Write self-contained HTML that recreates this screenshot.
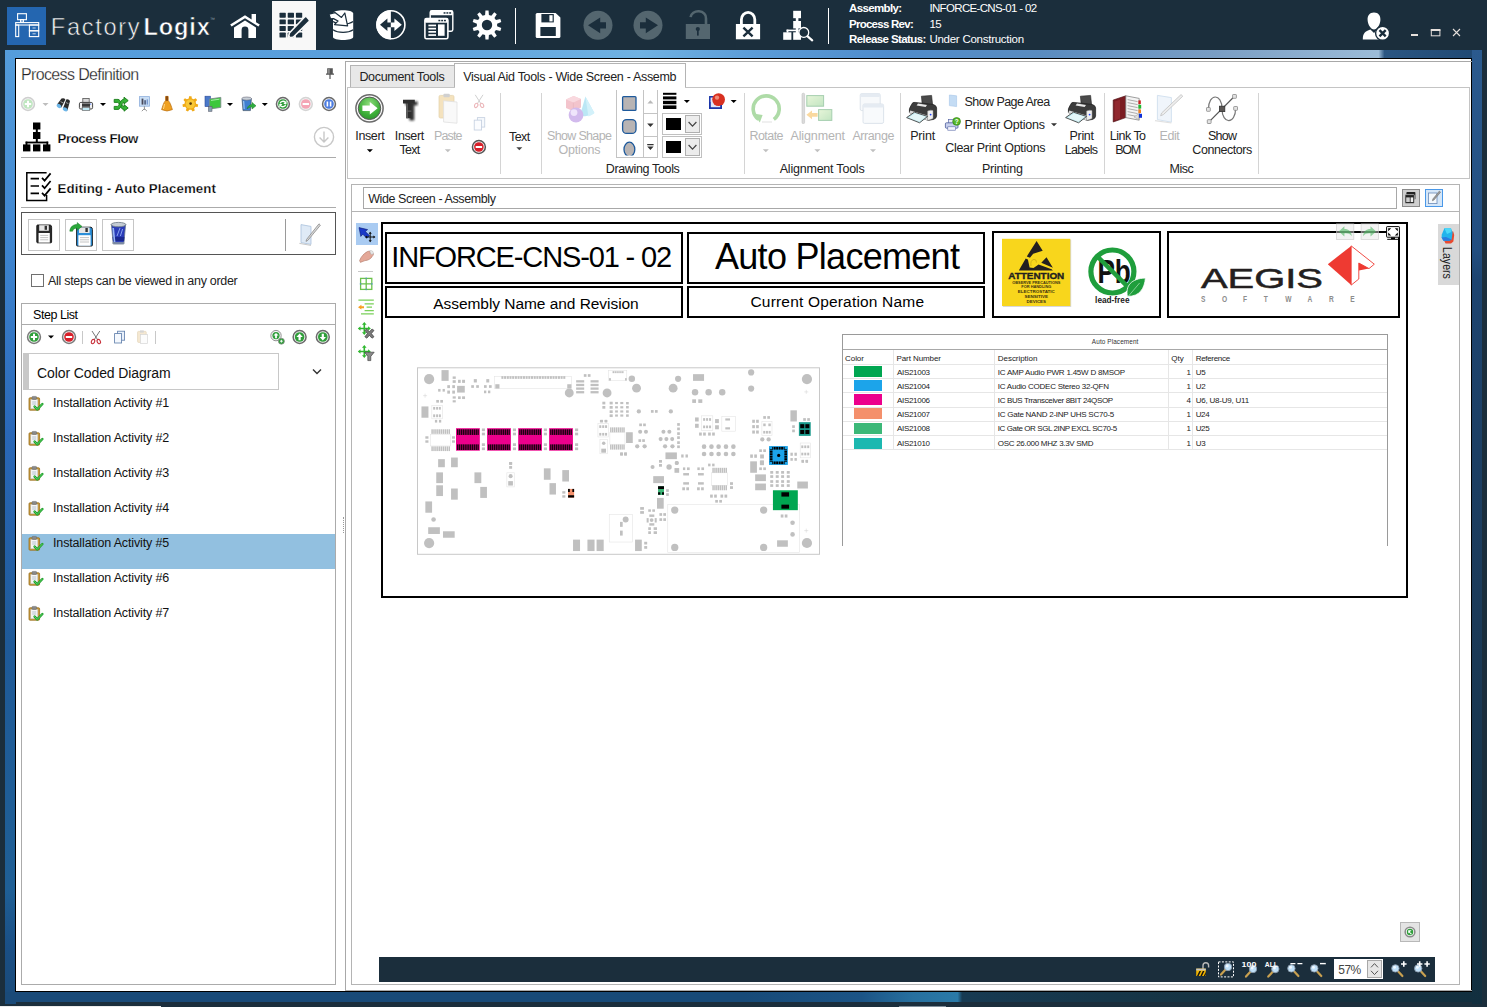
<!DOCTYPE html>
<html><head><meta charset="utf-8"><title>FactoryLogix</title>
<style>
html,body{margin:0;padding:0;}
body{width:1487px;height:1007px;overflow:hidden;position:relative;background:#1b2e3c;font-family:"Liberation Sans",sans-serif;}
.a{position:absolute;box-sizing:border-box;}
.t{position:absolute;white-space:nowrap;line-height:1;}
</style></head><body>
<div class="a" style="left:5px;top:50px;width:1477px;height:9px;background:linear-gradient(90deg,#559ddb 0%,#5a9fdc 25%,#70b2e2 43%,#5c9dd8 50.5%,#4f8ccc 60%,#5a8cc0 70%,#7a9ec4 82%,#9cbcd8 93%,#2b5682 93.4%,#1f4872 100%);"></div>
<div class="a" style="left:5px;top:50px;width:11px;height:954px;background:linear-gradient(180deg,#559ddb 0%,#3f86d0 20%,#2a68b8 40%,#1f5a98 62%,#1f5f95 88%,#1a4f85 94%,#1a4a78 100%);"></div>
<div class="a" style="left:5px;top:992px;width:1477px;height:10px;background:linear-gradient(90deg,#1a4a78 0%,#174a78 50%,#1b5486 58%,#27709f 61.5%,#2a7aa8 64.5%,#173a52 64.8%,#15323f 85%,#122f3f 100%);"></div>
<div class="a" style="left:1472px;top:50px;width:10px;height:954px;background:linear-gradient(180deg,#2b5a8e 0%,#224e80 21%,#1d4470 24%,#1b3a58 60%,#122f3f 100%);"></div>
<div class="a" style="left:0px;top:0px;width:5px;height:1007px;background:#1b2e3c;"></div>
<div class="a" style="left:0px;top:1004px;width:1487px;height:3px;background:#1b2e3c;"></div>
<div class="a" style="left:0px;top:1006px;width:161px;height:1px;background:#ececec;"></div>
<div class="a" style="left:899px;top:1006px;width:47px;height:1px;background:#7f8e9a;"></div>
<div class="a" style="left:15px;top:58px;width:1457px;height:934px;background:#fff;border:1px solid #000;"></div>
<div class="a" style="left:0px;top:0px;width:1487px;height:50px;background:#1b2e3c;"></div>
<div class="a" style="left:7px;top:7px;width:39px;height:38px;background:#2466b0;"></div>
<div class="a" style="left:272px;top:1px;width:44px;height:49px;background:#f8f8f8;"></div>
<div class="a" style="left:515px;top:8px;width:1px;height:36px;background:#fff;"></div>
<div class="a" style="left:828px;top:8px;width:1px;height:36px;background:#fff;"></div>
<svg class="a" style="left:0px;top:0px;" width="1487" height="50" viewBox="0 0 1487 50"><g fill="none" stroke="#fff" stroke-width="1.1"><rect x="17.6" y="13.7" width="8.8" height="6"/><rect x="20.6" y="19.7" width="2.8" height="2.4"/><rect x="15.7" y="22.6" width="23" height="2.4"/><rect x="15.7" y="25" width="3" height="11.6"/><rect x="29.4" y="25" width="9.3" height="5.8"/><rect x="29.4" y="30.8" width="9.3" height="5.8"/><path d="M32.5 28h3.2M32.5 33.8h3.2" stroke-width="0.9" opacity="0.8"/></g><path fill="#fff" d="M245 15.2 L230.2 24.6 L231.6 26.6 L245 18.2 L258.4 26.6 L259.8 24.6 L256 22.2 V14 H251.6 V19.4 Z"/><path fill="#fff" d="M245 20.4 L234 27.4 V38 H241.6 V30 a3.4 3.4 0 0 1 6.8 0 V38 H256 V27.4 Z"/><g fill="#1b2e3c"><rect x="279.5" y="12.8" width="6.3" height="4.9" rx="0.6"/><rect x="287.7" y="12.8" width="6.3" height="4.9" rx="0.6"/><rect x="295.9" y="12.8" width="6.3" height="4.9" rx="0.6"/><rect x="279.5" y="19.4" width="6.3" height="4.9" rx="0.6"/><rect x="287.7" y="19.4" width="6.3" height="4.9" rx="0.6"/><rect x="295.9" y="19.4" width="6.3" height="4.9" rx="0.6"/><rect x="279.5" y="26.0" width="6.3" height="4.9" rx="0.6"/><rect x="287.7" y="26.0" width="6.3" height="4.9" rx="0.6"/><rect x="295.9" y="26.0" width="6.3" height="4.9" rx="0.6"/><rect x="279.5" y="32.6" width="6.3" height="4.9" rx="0.6"/><rect x="287.7" y="32.6" width="6.3" height="4.9" rx="0.6"/><rect x="295.9" y="32.6" width="6.3" height="4.9" rx="0.6"/></g><path d="M304.6 17 a1.6 1.6 0 0 1 2.2 0 L309 19.4 a1.6 1.6 0 0 1 0 2.2 L293.4 37 L288.2 38.2 L289.4 33 Z" fill="#1b2e3c" stroke="#f8f8f8" stroke-width="1.6" stroke-linejoin="round"/><path d="M289.2 35.6 L290.7 37.1 L288.4 37.9 Z" fill="#f8f8f8"/><path fill="#fff" d="M333 13.5 C333 9 353.2 9 353.2 13.5 V37 C353.2 41 333 41 333 37 Z"/><path fill="none" stroke="#1b2e3c" stroke-width="1.3" d="M333 21.5 C338 25 348 25 353.2 21.5 M333 29.8 C338 33.3 348 33.3 353.2 29.8"/><path fill="#fff" stroke="#1b2e3c" stroke-width="1.2" stroke-linejoin="round" d="M329 14.2 L335 12.6 L341.5 17.4 L344.8 13 L347.6 25.8 L334.5 24.6 L338 21 L333.5 18.6 L330.5 18.8 Z"/><circle cx="390.9" cy="24.8" r="14" fill="none" stroke="#fff" stroke-width="1.6"/><path fill="#fff" d="M390.9 10.2 A14.6 14.6 0 0 0 390.9 39.4 Z"/><path fill="#1b2e3c" d="M380 24.8 L387.4 18.6 V22.4 H391 V27.2 H387.4 V31 Z"/><path fill="#fff" d="M401.8 24.8 L394.4 18.6 V22.4 H390.8 V27.2 H394.4 V31 Z"/><rect x="430.2" y="10.8" width="22.6" height="20.4" rx="1.6" fill="#1b2e3c" stroke="#fff" stroke-width="1.4"/><rect x="430.2" y="10.8" width="22.6" height="4.4" rx="1.2" fill="#fff"/><g fill="#1b2e3c"><rect x="443.6" y="12.2" width="1.9" height="1.5"/><rect x="446.4" y="12.2" width="1.9" height="1.5"/><rect x="449.2" y="12.2" width="1.9" height="1.5"/></g><rect x="424.9" y="18.6" width="23" height="20.2" rx="1.6" fill="#1b2e3c" stroke="#fff" stroke-width="1.6"/><rect x="424.9" y="18.6" width="23" height="4.2" rx="1.2" fill="#fff"/><g fill="#1b2e3c"><rect x="438.4" y="19.8" width="1.9" height="1.5"/><rect x="441.2" y="19.8" width="1.9" height="1.5"/><rect x="444" y="19.8" width="1.9" height="1.5"/></g><g fill="#fff"><rect x="428.4" y="24.6" width="7.6" height="1.7"/><rect x="428.4" y="27.8" width="7.6" height="1.7"/><rect x="428.4" y="31" width="7.6" height="1.7"/><rect x="428.4" y="34.2" width="7.6" height="1.7"/><rect x="438" y="24.4" width="6.6" height="11.4"/></g><path fill="#fff" fill-rule="evenodd" d="M485.09 14.98 L485.44 10.48 L488.56 10.48 L488.91 14.98 L491.34 15.77 L494.27 12.34 L496.79 14.17 L494.44 18.02 L495.94 20.09 L500.33 19.03 L501.29 21.99 L497.12 23.72 L497.12 26.28 L501.29 28.01 L500.33 30.97 L495.94 29.91 L494.44 31.98 L496.79 35.83 L494.27 37.66 L491.34 34.23 L488.91 35.02 L488.56 39.52 L485.44 39.52 L485.09 35.02 L482.66 34.23 L479.73 37.66 L477.21 35.83 L479.56 31.98 L478.06 29.91 L473.67 30.97 L472.71 28.01 L476.88 26.28 L476.88 23.72 L472.71 21.99 L473.67 19.03 L478.06 20.09 L479.56 18.02 L477.21 14.17 L479.73 12.34 L482.66 15.77 Z M481.80 25.00 a5.20 5.20 0 1 0 10.40 0 a5.20 5.20 0 1 0 -10.40 0 Z"/><path fill="#fff" d="M537.2 13 H555.6 L560.4 17.4 V36.4 a1.5 1.5 0 0 1 -1.5 1.5 H537.2 a1.5 1.5 0 0 1 -1.5 -1.5 V14.5 a1.5 1.5 0 0 1 1.5 -1.5 Z"/><rect x="541.4" y="14" width="12.4" height="8.4" fill="#1b2e3c"/><rect x="549.4" y="15.2" width="3.2" height="6.2" fill="#fff"/><rect x="540.4" y="27" width="15.4" height="9" fill="#1b2e3c"/><circle cx="598" cy="25.3" r="14.5" fill="#54666f"/><path fill="#1b2e3c" d="M588 25.3 L600.2 17.4 V22.2 H606 V28.4 H600.2 V33.2 Z"/><circle cx="648" cy="25.3" r="14.5" fill="#54666f"/><path fill="#1b2e3c" d="M658 25.3 L645.8 17.4 V22.2 H640 V28.4 H645.8 V33.2 Z"/><rect x="685.8" y="24" width="24.2" height="15" fill="#54666f"/><path fill="none" stroke="#54666f" stroke-width="2.6" d="M690.6 17.2 a7.6 6.4 0 0 1 15.4 1.2 V24.5"/><circle cx="697.8" cy="29" r="2.1" fill="#1b2e3c"/><rect x="697" y="29" width="1.7" height="6.6" fill="#1b2e3c"/><rect x="735.9" y="24" width="24.2" height="15.3" fill="#fff"/><path fill="none" stroke="#fff" stroke-width="2.8" d="M741.4 24.5 V19.6 a6.7 7.2 0 0 1 13.4 0 V24.5"/><path stroke="#1b2e3c" stroke-width="2.4" d="M743.4 27.6 L752.6 36.4 M752.6 27.6 L743.4 36.4"/><g fill="#fff"><rect x="793.2" y="10.8" width="7.8" height="7.4"/><rect x="795.8" y="18" width="2.6" height="3.4"/><rect x="793.2" y="21" width="7.8" height="7.4"/><rect x="795.8" y="28" width="2.6" height="5"/><rect x="786.6" y="29.6" width="12" height="1.6"/><rect x="786.6" y="29.6" width="1.8" height="3"/><rect x="783.2" y="32.3" width="8.2" height="7.5"/><rect x="793.2" y="32.3" width="7.8" height="7.5"/></g><circle cx="803.8" cy="32.4" r="4.9" fill="#1b2e3c" stroke="#fff" stroke-width="1.3"/><path stroke="#fff" stroke-width="2.2" stroke-linecap="round" d="M807.6 36.4 L812.2 40.4"/><path d="M1374 12.6 C1378.6 12.6 1380.6 16 1380.4 20 C1380.2 25 1377 29.4 1374 29.4 C1371 29.4 1367.8 25 1367.6 20 C1367.4 16 1369.4 12.6 1374 12.6 Z" fill="#fff"/><path fill="#fff" d="M1362.8 39.4 C1363 33 1365 31.5 1370.4 29.6 L1374 33 L1377.6 29.6 C1381 30.5 1383 32 1384 39.4 Z"/><circle cx="1382.6" cy="33.2" r="7" fill="#fff" stroke="#1b2e3c" stroke-width="1.4"/><path stroke="#1b2e3c" stroke-width="2.4" d="M1379.5 30.1 L1385.7 36.3 M1385.7 30.1 L1379.5 36.3"/><rect x="1411" y="34" width="7" height="2" fill="#e6e0dc"/><rect x="1431.3" y="30" width="8.6" height="5.8" fill="none" stroke="#e6e0dc" stroke-width="1"/><rect x="1430.8" y="29" width="9.6" height="2" fill="#e6e0dc"/><path stroke="#e6e0dc" stroke-width="1.1" d="M1453 29 L1460 36 M1460 29 L1453 36"/></svg>
<span class="t " style="left:50.80px;top:15.72px;font-size:23.6px;letter-spacing:1.688px;color:#f4f4f4;-webkit-text-stroke:0.55px #1b2e3c;">Factory</span>
<span class="t " style="left:143.60px;top:15.72px;font-size:23.6px;letter-spacing:0.814px;color:#fff;font-weight:bold;-webkit-text-stroke:0.6px #1b2e3c;">Logix</span>
<span class="t " style="left:210.00px;top:17.37px;font-size:5px;color:#8fa0aa;">™</span>
<span class="t " style="left:849.00px;top:2.67px;font-size:11.5px;letter-spacing:-0.629px;color:#fff;font-weight:bold;">Assembly:</span>
<span class="t " style="left:849.00px;top:19.07px;font-size:11.5px;letter-spacing:-0.740px;color:#fff;font-weight:bold;">Process Rev:</span>
<span class="t " style="left:849.00px;top:33.67px;font-size:11.5px;letter-spacing:-0.590px;color:#fff;font-weight:bold;">Release Status:</span>
<span class="t " style="left:929.40px;top:2.67px;font-size:11.5px;letter-spacing:-0.658px;color:#fff;">INFORCE-CNS-01 - 02</span>
<span class="t " style="left:929.40px;top:19.07px;font-size:11.5px;letter-spacing:-0.646px;color:#fff;">15</span>
<span class="t " style="left:929.40px;top:33.67px;font-size:11.5px;letter-spacing:-0.254px;color:#fff;">Under Construction</span>
<span class="t " style="left:21.00px;top:67.06px;font-size:16px;letter-spacing:-0.636px;color:#222;-webkit-text-stroke:0.25px #fff;">Process Definition</span>
<svg class="a" style="left:323px;top:67px;" width="14" height="14" viewBox="0 0 14 14"><path fill="#555" d="M4.2 1.2 H9.8 V6.6 H11 V7.8 H7.6 V12 H6.4 V7.8 H3 V6.6 H4.2 Z"/><rect x="5.2" y="2" width="1.4" height="4.6" fill="#999"/></svg>
<svg class="a" style="left:22px;top:122px;" width="30" height="30" viewBox="0 0 30 30"><g fill="#000"><rect x="11" y="0.5" width="7.4" height="7"/><rect x="13.8" y="7" width="2" height="4"/><rect x="11" y="10" width="7.4" height="7"/><rect x="13.8" y="16.5" width="2" height="4.5"/><rect x="3.6" y="19.6" width="22.6" height="1.8"/><rect x="3.6" y="19.6" width="1.8" height="4"/><rect x="24.4" y="19.6" width="1.8" height="4"/><rect x="1" y="22.4" width="7.4" height="7"/><rect x="11" y="22.4" width="7.4" height="7"/><rect x="21" y="22.4" width="7.4" height="7"/></g></svg>
<span class="t " style="left:57.50px;top:131.84px;font-size:13.3px;letter-spacing:-0.437px;color:#000;font-weight:bold;-webkit-text-stroke:0.25px #fff;">Process Flow</span>
<svg class="a" style="left:313px;top:126px;" width="22" height="22" viewBox="0 0 22 22"><circle cx="11" cy="11" r="9.6" fill="none" stroke="#c8c8c8" stroke-width="1.4"/><path d="M11 5.5 V15.5 M6.6 11.4 L11 16 L15.4 11.4" fill="none" stroke="#c8c8c8" stroke-width="1.4"/></svg>
<div class="a" style="left:21px;top:157px;width:315px;height:1px;background:#ababab;"></div>
<svg class="a" style="left:25px;top:171px;" width="30" height="32" viewBox="0 0 30 32"><path fill="none" stroke="#000" stroke-width="1.5" d="M21.6 1.8 H1.8 V29.4 H21.6 V24"/><path stroke="#000" stroke-width="1.6" fill="none" d="M5.6 7.6 H14 M5.6 15 H14 M5.6 22.4 H14"/><path stroke="#000" stroke-width="1.7" fill="none" d="M17 6.8 L19.6 9.6 L25.6 2.4 M17 14.4 L19.6 17.2 L25.6 10 M17 21.8 L19.6 24.6 L25.6 17.4"/></svg>
<span class="t " style="left:57.50px;top:181.84px;font-size:13.3px;letter-spacing:0.067px;color:#000;font-weight:bold;-webkit-text-stroke:0.25px #fff;">Editing - Auto Placement</span>
<div class="a" style="left:21px;top:207px;width:315px;height:1px;background:#ababab;"></div>
<div class="a" style="left:21px;top:212px;width:315px;height:43px;border:1px solid #555;"></div>
<div class="a" style="left:28px;top:219px;width:32px;height:32px;border:1px solid #c6c6c6;"></div>
<div class="a" style="left:65px;top:219px;width:32px;height:32px;border:1px solid #c6c6c6;"></div>
<div class="a" style="left:102px;top:219px;width:32px;height:32px;border:1px solid #c6c6c6;"></div>
<div class="a" style="left:285px;top:219px;width:1px;height:32px;background:#9a9a9a;"></div>
<div class="a" style="left:31px;top:274px;width:13px;height:13px;background:#fff;border:1px solid #707070;"></div>
<span class="t " style="left:48.00px;top:275.02px;font-size:12.5px;letter-spacing:-0.295px;color:#222;">All steps can be viewed in any order</span>
<div class="a" style="left:21px;top:303px;width:315px;height:682px;border:1px solid #ababab;"></div>
<span class="t " style="left:33.00px;top:309.02px;font-size:12.5px;letter-spacing:-0.460px;color:#000;">Step List</span>
<div class="a" style="left:22px;top:324px;width:313px;height:1px;background:#ababab;"></div>
<div class="a" style="left:82px;top:331px;width:1px;height:13px;background:#c8c8c8;"></div>
<div class="a" style="left:155px;top:331px;width:1px;height:13px;background:#c8c8c8;"></div>
<div class="a" style="left:23px;top:353px;width:256px;height:37px;background:#fff;border:1px solid #c8c8c8;"></div>
<div class="a" style="left:23px;top:353px;width:6px;height:37px;background:#c8c8c8;"></div>
<span class="t " style="left:37.00px;top:365.75px;font-size:14px;letter-spacing:-0.100px;color:#111;">Color Coded Diagram</span>
<svg class="a" style="left:311px;top:367px;" width="12" height="10" viewBox="0 0 12 10"><path d="M2 2.6 L6 6.6 L10 2.6" fill="none" stroke="#333" stroke-width="1.4"/></svg>
<div class="a" style="left:22px;top:534px;width:313px;height:35px;background:#92c0e0;"></div>
<span class="t " style="left:53.00px;top:397.02px;font-size:12.5px;letter-spacing:-0.146px;color:#111;">Installation Activity #1</span>
<span class="t " style="left:53.00px;top:432.02px;font-size:12.5px;letter-spacing:-0.146px;color:#111;">Installation Activity #2</span>
<span class="t " style="left:53.00px;top:467.02px;font-size:12.5px;letter-spacing:-0.146px;color:#111;">Installation Activity #3</span>
<span class="t " style="left:53.00px;top:502.02px;font-size:12.5px;letter-spacing:-0.146px;color:#111;">Installation Activity #4</span>
<span class="t " style="left:53.00px;top:537.02px;font-size:12.5px;letter-spacing:-0.146px;color:#111;">Installation Activity #5</span>
<span class="t " style="left:53.00px;top:572.02px;font-size:12.5px;letter-spacing:-0.146px;color:#111;">Installation Activity #6</span>
<span class="t " style="left:53.00px;top:607.02px;font-size:12.5px;letter-spacing:-0.146px;color:#111;">Installation Activity #7</span>
<div class="a" style="left:343px;top:517px;width:1px;height:16px;border-left:1px dotted #999;"></div>
<svg class="a" style="left:0px;top:0px;" width="360" height="700" viewBox="0 0 360 700"><g opacity="1"><circle cx="28" cy="104" r="6.45" fill="#f4f4f4" stroke="#cfcfcf" stroke-width="1.5"/><circle cx="28" cy="104" r="4.8" fill="#bfe6c0"/><g transform="translate(28 104)"><path stroke="#fff" stroke-width="2" d="M-3.2 0 H3.2 M0 -3.2 V3.2"/></g></g><path fill="#bdbdbd" d="M42.5 103 h6 l-3 3 Z"/><g><path d="M57 104.5 L61.5 98.6 Q64 97.4 65.4 99.6 L61.4 107.6 Z" fill="#2b2b2b"/><path d="M63 108.6 L66.2 99.6 Q68.6 98.6 70 101 L67.4 110.4 Z" fill="#2b2b2b"/><ellipse cx="59" cy="106" rx="2.6" ry="1.9" transform="rotate(35 59 106)" fill="#6db6e8"/><ellipse cx="65.2" cy="109.4" rx="2.6" ry="1.9" transform="rotate(25 65.2 109.4)" fill="#6db6e8"/><path d="M60.6 101.6 L63.6 103.2 M66 102.6 L68.4 103.6" stroke="#9a9a9a" stroke-width="1"/></g><g transform="translate(78.8 98)"><rect x="4" y="0.5" width="6.4" height="4" fill="#d8d8d8" stroke="#555" stroke-width="0.8"/><rect x="0.6" y="4.4" width="13.2" height="6.6" rx="1.4" fill="#f2f2f2" stroke="#333" stroke-width="0.9"/><rect x="3.2" y="5.4" width="8" height="3.4" fill="#3a3a3a"/><rect x="3.4" y="9.6" width="7.6" height="2.8" fill="#bfe9f5" stroke="#555" stroke-width="0.6"/><rect x="11.4" y="5.6" width="1" height="1" fill="#36f"/></g><path fill="#000" d="M100 103 h6 l-3 3 Z"/><g fill="#36b336" stroke="#167a16" stroke-width="0.9" stroke-linejoin="round"><path d="M114.2 99.4 H118 C121 99.4 121.6 106.6 124 106.6 V104.6 L128.2 108 L124 111.2 V109.4 C120 109.4 119.6 102.4 117.4 102.4 H114.2 Z"/><path d="M114.2 109.4 H118 C121 109.4 121.6 102.2 124 102.2 V104 L128.2 100.6 L124 97.2 V99.2 C120 99.2 119.6 106.4 117.4 106.4 H114.2 Z"/></g><g><rect x="139.4" y="96.6" width="10" height="9.6" fill="#c9def5" stroke="#8fb0dc" stroke-width="0.8"/><rect x="141.6" y="98.6" width="1.8" height="6" fill="#4a4a5a"/><rect x="144.2" y="100.2" width="1.8" height="4.4" fill="#5a6a8a"/><rect x="146.6" y="99.4" width="1.4" height="5.2" fill="#7a9ad0"/><path d="M144.4 106.2 V110 M144.4 108.6 L141.8 111.2 M144.4 108.6 L147 111.2" stroke="#8a8a8a" stroke-width="0.9" fill="none"/></g><g><path d="M165.6 96.4 h2.6 v4 C170.6 103 171.4 107 172.4 109.6 Q167 112.4 161.6 109.6 C162.6 107 163.2 103 165.6 100.4 Z" fill="#f0a020" stroke="#b86a08" stroke-width="0.7"/><rect x="165.8" y="96.2" width="2.2" height="4.6" fill="#8a4a10"/><path d="M164.4 104 Q164 107.6 163.4 109" stroke="#ffd98a" stroke-width="1" fill="none"/></g><path fill="#f0aa18" fill-rule="evenodd" d="M188.76 98.41 L189.10 96.19 L191.50 96.19 L191.84 98.41 L193.71 99.31 L195.66 98.19 L197.15 100.07 L195.63 101.72 L196.09 103.74 L198.18 104.57 L197.65 106.91 L195.41 106.75 L194.12 108.37 L194.77 110.51 L192.61 111.56 L191.34 109.71 L189.26 109.71 L187.99 111.56 L185.83 110.51 L186.48 108.37 L185.19 106.75 L182.95 106.91 L182.42 104.57 L184.51 103.74 L184.97 101.72 L183.45 100.07 L184.94 98.19 L186.89 99.31 Z M190.29 104.00 a0.01 0.01 0 1 0 0.02 0 a0.01 0.01 0 1 0 -0.02 0 Z"/><circle cx="190.3" cy="104" r="4.6" fill="#f8c838"/><circle cx="190.6" cy="103.6" r="1.3" fill="#5a3a08"/><g><rect x="205" y="96.2" width="5.4" height="10.4" fill="#4a78c8" stroke="#2a4a9a" stroke-width="0.6"/><path d="M209.6 99 L220.8 97.4 V107.4 L209.6 109 Z" fill="#3cc83c" stroke="#7a8a8a" stroke-width="0.9"/><path d="M211 100.4 L219.4 99.2" stroke="#a8f0a8" stroke-width="1"/><rect x="208.4" y="106.4" width="3.6" height="5" fill="#8aa0b0" stroke="#556" stroke-width="0.5"/></g><path fill="#000" d="M227 103 h6 l-3 3 Z"/><g><path d="M242 98.6 h9.4 l-1 12 h-7.4 Z" fill="#3f7fd0" stroke="#456" stroke-width="0.7"/><ellipse cx="246.7" cy="98.6" rx="4.9" ry="1.6" fill="#c8d0d8" stroke="#667" stroke-width="0.6"/><path d="M243.6 101 l0.6 8" stroke="#9cc4f0" stroke-width="1.2"/><path d="M247 108.8 C248 105.6 250 104.6 252 104.6 V102.4 L256 105.8 L252 109 V107 C250 107 248.6 107.6 247 108.8 Z" fill="#2fae3f" stroke="#1c7a2a" stroke-width="0.5"/></g><path fill="#000" d="M261.8 103 h6 l-3 3 Z"/><g opacity="1"><circle cx="282.9" cy="104" r="6.45" fill="#f4f4f4" stroke="#6a6a6a" stroke-width="1.5"/><circle cx="282.9" cy="104" r="4.8" fill="#2f9e3a"/><g transform="translate(282.9 104)"><path fill="none" stroke="#fff" stroke-width="1.3" d="M-2.8 -0.6 A3 3 0 0 1 2.4 -1.6 M2.8 0.6 A3 3 0 0 1 -2.4 1.6"/><path fill="#fff" d="M3.6 -3.4 V0 H0.4 Z M-3.6 3.4 V0 H-0.4 Z"/></g></g><g opacity="1"><circle cx="305.8" cy="104" r="6.45" fill="#f4f4f4" stroke="#d4d4d4" stroke-width="1.5"/><circle cx="305.8" cy="104" r="4.8" fill="#f4a6b6"/><g transform="translate(305.8 104)"><path stroke="#fff" stroke-width="2" d="M-3.2 0 H3.2"/></g></g><g opacity="1"><circle cx="329" cy="104" r="6.45" fill="#f4f4f4" stroke="#6a6a6a" stroke-width="1.5"/><circle cx="329" cy="104" r="4.8" fill="#4a7be0"/><g transform="translate(329 104)"><path stroke="#fff" stroke-width="1.6" d="M-1.6 -2.6 V2.6 M1.6 -2.6 V2.6"/></g></g><g opacity="1"><circle cx="34" cy="337" r="6.45" fill="#f4f4f4" stroke="#7a7a7a" stroke-width="1.5"/><circle cx="34" cy="337" r="4.8" fill="#2f9e3a"/><g transform="translate(34 337)"><path stroke="#fff" stroke-width="2" d="M-3.2 0 H3.2 M0 -3.2 V3.2"/></g></g><path fill="#000" d="M48 335.5 h6 l-3 3 Z"/><g opacity="1"><circle cx="69" cy="337" r="6.45" fill="#f4f4f4" stroke="#7a7a7a" stroke-width="1.5"/><circle cx="69" cy="337" r="4.8" fill="#d8202a"/><g transform="translate(69 337)"><path stroke="#fff" stroke-width="2" d="M-3.2 0 H3.2"/></g></g><g transform="translate(90.4 330.6)" opacity="1"><path d="M1.6 0.4 L7.4 9.4 M9.4 0.4 L3.6 9.4" stroke="#777" stroke-width="1" fill="none"/><ellipse cx="2.6" cy="11" rx="1.6" ry="2.2" fill="none" stroke="#c8303a" stroke-width="1.1" transform="rotate(25 2.6 11)"/><ellipse cx="8.4" cy="11" rx="1.6" ry="2.2" fill="none" stroke="#c8303a" stroke-width="1.1" transform="rotate(-25 8.4 11)"/></g><g transform="translate(114 330.6)" opacity="1"><rect x="3.6" y="0.6" width="7" height="9" fill="#e8f0fa" stroke="#5a7aa8" stroke-width="0.8"/><rect x="0.6" y="3" width="7" height="9.4" fill="#f4f8fd" stroke="#5a7aa8" stroke-width="0.8"/></g><g transform="translate(137 330)" opacity="0.4"><rect x="0.6" y="1.4" width="8.6" height="11" rx="0.8" fill="#e8c890" stroke="#b89450" stroke-width="0.7"/><rect x="3" y="0.4" width="3.8" height="2.2" fill="#999"/><rect x="3.4" y="4.6" width="7" height="9" fill="#fafafa" stroke="#999" stroke-width="0.7"/></g><g><circle cx="276" cy="335.6" r="5.2" fill="#f4f4f4" stroke="#888" stroke-width="0.9"/><circle cx="276" cy="335.6" r="3.6" fill="#2f9e3a"/><g transform="translate(276 335.6) scale(0.8)"><path fill="#fff" d="M0 -3.4 L3.2 0 H1.1 V3.2 H-1.1 V0 H-3.2 Z"/></g><circle cx="281.4" cy="341.2" r="3" fill="#2f9e3a" stroke="#888" stroke-width="0.7"/><path d="M280 341.2 h2.8 M281.4 339.8 v2.8" stroke="#fff" stroke-width="0.9"/></g><g opacity="1"><circle cx="299.6" cy="337" r="6.45" fill="#f4f4f4" stroke="#6a6a6a" stroke-width="1.5"/><circle cx="299.6" cy="337" r="4.8" fill="#2f9e3a"/><g transform="translate(299.6 337)"><path fill="#fff" d="M0 -3.4 L3.2 0 H1.1 V3.2 H-1.1 V0 H-3.2 Z"/></g></g><g opacity="1"><circle cx="322.8" cy="337" r="6.45" fill="#f4f4f4" stroke="#6a6a6a" stroke-width="1.5"/><circle cx="322.8" cy="337" r="4.8" fill="#2f9e3a"/><g transform="translate(322.8 337)"><path fill="#fff" d="M0 3.4 L3.2 0 H1.1 V-3.2 H-1.1 V0 H-3.2 Z"/></g></g><g transform="translate(36.2 224.4)"><path d="M0.6 1.4 Q0.6 0.6 1.4 0.6 H14 Q15.4 0.8 15.4 3 V17.6 Q15.4 18.4 14.6 18.4 H1.4 Q0.6 18.4 0.6 17.6 Z" fill="#2a2a2a" stroke="#111" stroke-width="0.9"/><rect x="3" y="0.8" width="9.6" height="5.6" fill="#e6e6e6"/><rect x="8.4" y="1.4" width="2.4" height="4" fill="#333"/><rect x="2.4" y="8.6" width="11.2" height="9.6" fill="#fff"/><path d="M4 11 h8 M4 13.2 h8 M4 15.4 h8" stroke="#aaa" stroke-width="0.7"/></g><g transform="translate(76 226.6)"><path d="M0.6 1.4 Q0.6 0.6 1.4 0.6 H15 Q16.4 0.8 16.4 3 V18.6 Q16.4 19.4 15.6 19.4 H1.4 Q0.6 19.4 0.6 18.6 Z" fill="#2a8ed8" stroke="#111" stroke-width="0.9"/><rect x="3" y="0.8" width="10.6" height="5.6" fill="#e6e6e6"/><rect x="9.4" y="1.4" width="2.4" height="4" fill="#333"/><rect x="2.4" y="8.6" width="12.2" height="10.6" fill="#fff"/><path d="M4 11 h9 M4 13.2 h9 M4 15.4 h9" stroke="#aaa" stroke-width="0.7"/></g><path d="M69.8 231.2 C70.2 226.6 73.4 224.4 77.2 224.6 V222.6 L82 226.4 L77.2 230.2 V228.2 C74.8 228 73 229 72.6 231.2 Z" fill="#2aa83a" stroke="#187a28" stroke-width="0.5"/><g><path d="M111.4 224.6 h14.2 l-1.8 19.4 h-10.6 Z" fill="#2a3cb8" stroke="#6a7a8a" stroke-width="0.8"/><path d="M112.6 237 h11.8 l-0.4 4 h-11 Z" fill="#1a2890"/><ellipse cx="118.5" cy="224.6" rx="7.4" ry="2.2" fill="#c4ccd4" stroke="#6a7684" stroke-width="0.8"/><path d="M113.2 228 l1.4 14" stroke="#9ab8f4" stroke-width="1.6"/><path d="M117 236 L120 228 M120.4 236 L122.6 229" stroke="#8aa4f0" stroke-width="1"/><path d="M112.6 243 h11.6" stroke="#8a96a4" stroke-width="1.6"/></g><g transform="translate(298.4 223) scale(1)" opacity="1"><path d="M2.6 1.6 L12.6 3.4 V21.4 L2.6 19.6 Z" fill="#dfeaf6" stroke="#a8c0dc" stroke-width="0.8"/><path d="M1 20.4 L12.6 22.4" stroke="#c8c8c8" stroke-width="1"/><path d="M20.6 0.8 L22 2.2 L9.4 17.4 L7.6 18.4 L8.2 16.4 Z" fill="#d8d8d8" stroke="#8a8a8a" stroke-width="0.8"/></g><g transform="translate(28.2 395.6)"><rect x="0.8" y="2.2" width="10.6" height="12.4" rx="1" fill="#c89a3c" stroke="#9a6e1c" stroke-width="0.8"/><rect x="2.6" y="3.8" width="7" height="9.4" fill="#f6f6f6" stroke="#bbb" stroke-width="0.5"/><rect x="3.8" y="0.8" width="4.6" height="3" rx="0.8" fill="#8a8a8a" stroke="#666" stroke-width="0.5"/><path d="M4 6.4 h4 M4 8.4 h4" stroke="#9ab" stroke-width="0.7"/><path d="M6.4 11 L9 13.8 L14.2 8.4" fill="none" stroke="#1f9a2a" stroke-width="2.4" stroke-linecap="round" stroke-linejoin="round"/><path d="M6.4 11 L9 13.8 L14.2 8.4" fill="none" stroke="#5fe06a" stroke-width="0.9" stroke-linecap="round" stroke-linejoin="round"/></g><g transform="translate(28.2 430.6)"><rect x="0.8" y="2.2" width="10.6" height="12.4" rx="1" fill="#c89a3c" stroke="#9a6e1c" stroke-width="0.8"/><rect x="2.6" y="3.8" width="7" height="9.4" fill="#f6f6f6" stroke="#bbb" stroke-width="0.5"/><rect x="3.8" y="0.8" width="4.6" height="3" rx="0.8" fill="#8a8a8a" stroke="#666" stroke-width="0.5"/><path d="M4 6.4 h4 M4 8.4 h4" stroke="#9ab" stroke-width="0.7"/><path d="M6.4 11 L9 13.8 L14.2 8.4" fill="none" stroke="#1f9a2a" stroke-width="2.4" stroke-linecap="round" stroke-linejoin="round"/><path d="M6.4 11 L9 13.8 L14.2 8.4" fill="none" stroke="#5fe06a" stroke-width="0.9" stroke-linecap="round" stroke-linejoin="round"/></g><g transform="translate(28.2 465.6)"><rect x="0.8" y="2.2" width="10.6" height="12.4" rx="1" fill="#c89a3c" stroke="#9a6e1c" stroke-width="0.8"/><rect x="2.6" y="3.8" width="7" height="9.4" fill="#f6f6f6" stroke="#bbb" stroke-width="0.5"/><rect x="3.8" y="0.8" width="4.6" height="3" rx="0.8" fill="#8a8a8a" stroke="#666" stroke-width="0.5"/><path d="M4 6.4 h4 M4 8.4 h4" stroke="#9ab" stroke-width="0.7"/><path d="M6.4 11 L9 13.8 L14.2 8.4" fill="none" stroke="#1f9a2a" stroke-width="2.4" stroke-linecap="round" stroke-linejoin="round"/><path d="M6.4 11 L9 13.8 L14.2 8.4" fill="none" stroke="#5fe06a" stroke-width="0.9" stroke-linecap="round" stroke-linejoin="round"/></g><g transform="translate(28.2 500.6)"><rect x="0.8" y="2.2" width="10.6" height="12.4" rx="1" fill="#c89a3c" stroke="#9a6e1c" stroke-width="0.8"/><rect x="2.6" y="3.8" width="7" height="9.4" fill="#f6f6f6" stroke="#bbb" stroke-width="0.5"/><rect x="3.8" y="0.8" width="4.6" height="3" rx="0.8" fill="#8a8a8a" stroke="#666" stroke-width="0.5"/><path d="M4 6.4 h4 M4 8.4 h4" stroke="#9ab" stroke-width="0.7"/><path d="M6.4 11 L9 13.8 L14.2 8.4" fill="none" stroke="#1f9a2a" stroke-width="2.4" stroke-linecap="round" stroke-linejoin="round"/><path d="M6.4 11 L9 13.8 L14.2 8.4" fill="none" stroke="#5fe06a" stroke-width="0.9" stroke-linecap="round" stroke-linejoin="round"/></g><g transform="translate(28.2 535.6)"><rect x="0.8" y="2.2" width="10.6" height="12.4" rx="1" fill="#c89a3c" stroke="#9a6e1c" stroke-width="0.8"/><rect x="2.6" y="3.8" width="7" height="9.4" fill="#f6f6f6" stroke="#bbb" stroke-width="0.5"/><rect x="3.8" y="0.8" width="4.6" height="3" rx="0.8" fill="#8a8a8a" stroke="#666" stroke-width="0.5"/><path d="M4 6.4 h4 M4 8.4 h4" stroke="#9ab" stroke-width="0.7"/><path d="M6.4 11 L9 13.8 L14.2 8.4" fill="none" stroke="#1f9a2a" stroke-width="2.4" stroke-linecap="round" stroke-linejoin="round"/><path d="M6.4 11 L9 13.8 L14.2 8.4" fill="none" stroke="#5fe06a" stroke-width="0.9" stroke-linecap="round" stroke-linejoin="round"/></g><g transform="translate(28.2 570.6)"><rect x="0.8" y="2.2" width="10.6" height="12.4" rx="1" fill="#c89a3c" stroke="#9a6e1c" stroke-width="0.8"/><rect x="2.6" y="3.8" width="7" height="9.4" fill="#f6f6f6" stroke="#bbb" stroke-width="0.5"/><rect x="3.8" y="0.8" width="4.6" height="3" rx="0.8" fill="#8a8a8a" stroke="#666" stroke-width="0.5"/><path d="M4 6.4 h4 M4 8.4 h4" stroke="#9ab" stroke-width="0.7"/><path d="M6.4 11 L9 13.8 L14.2 8.4" fill="none" stroke="#1f9a2a" stroke-width="2.4" stroke-linecap="round" stroke-linejoin="round"/><path d="M6.4 11 L9 13.8 L14.2 8.4" fill="none" stroke="#5fe06a" stroke-width="0.9" stroke-linecap="round" stroke-linejoin="round"/></g><g transform="translate(28.2 605.6)"><rect x="0.8" y="2.2" width="10.6" height="12.4" rx="1" fill="#c89a3c" stroke="#9a6e1c" stroke-width="0.8"/><rect x="2.6" y="3.8" width="7" height="9.4" fill="#f6f6f6" stroke="#bbb" stroke-width="0.5"/><rect x="3.8" y="0.8" width="4.6" height="3" rx="0.8" fill="#8a8a8a" stroke="#666" stroke-width="0.5"/><path d="M4 6.4 h4 M4 8.4 h4" stroke="#9ab" stroke-width="0.7"/><path d="M6.4 11 L9 13.8 L14.2 8.4" fill="none" stroke="#1f9a2a" stroke-width="2.4" stroke-linecap="round" stroke-linejoin="round"/><path d="M6.4 11 L9 13.8 L14.2 8.4" fill="none" stroke="#5fe06a" stroke-width="0.9" stroke-linecap="round" stroke-linejoin="round"/></g></svg>
<div class="a" style="left:345px;top:61px;width:1127px;height:930px;border:1px solid #a8a8a8;border-right:none;"></div>
<div class="a" style="left:350px;top:65px;width:105px;height:23px;background:#e8e8e8;border:1px solid #b4b4b4;border-bottom:none;"></div>
<div class="a" style="left:454px;top:63px;width:232px;height:25px;background:#fff;border:1px solid #b4b4b4;border-bottom:none;"></div>
<div class="a" style="left:347px;top:87px;width:1123px;height:92px;background:#fff;border:1px solid #c4c4c4;"></div>
<div class="a" style="left:455px;top:87px;width:230px;height:1px;background:#fff;"></div>
<span class="t " style="left:359.40px;top:70.62px;font-size:12.5px;letter-spacing:-0.314px;color:#222;">Document Tools</span>
<span class="t " style="left:463.20px;top:70.62px;font-size:12.5px;letter-spacing:-0.316px;color:#222;">Visual Aid Tools - Wide Screen - Assemb</span>
<div class="a" style="left:500px;top:93px;width:1px;height:81px;background:#d4d4d4;"></div>
<div class="a" style="left:541px;top:93px;width:1px;height:81px;background:#d4d4d4;"></div>
<div class="a" style="left:744px;top:93px;width:1px;height:81px;background:#d4d4d4;"></div>
<div class="a" style="left:900px;top:93px;width:1px;height:81px;background:#d4d4d4;"></div>
<div class="a" style="left:1104px;top:93px;width:1px;height:81px;background:#d4d4d4;"></div>
<div class="a" style="left:1258px;top:93px;width:1px;height:81px;background:#d4d4d4;"></div>
<span class="t " style="left:355.30px;top:129.92px;font-size:12.5px;letter-spacing:-0.377px;color:#222;">Insert</span>
<span class="t " style="left:394.80px;top:129.92px;font-size:12.5px;letter-spacing:-0.377px;color:#222;">Insert</span>
<span class="t " style="left:399.50px;top:144.02px;font-size:12.5px;letter-spacing:-0.731px;color:#222;">Text</span>
<span class="t " style="left:434.05px;top:129.92px;font-size:12.5px;letter-spacing:-0.893px;color:#b4b4b4;">Paste</span>
<span class="t " style="left:509.00px;top:131.02px;font-size:12.5px;letter-spacing:-0.581px;color:#222;">Text</span>
<span class="t " style="left:547.00px;top:129.92px;font-size:12.5px;letter-spacing:-0.669px;color:#b4b4b4;">Show Shape</span>
<span class="t " style="left:558.40px;top:144.02px;font-size:12.5px;letter-spacing:-0.154px;color:#b4b4b4;">Options</span>
<span class="t " style="left:605.75px;top:162.92px;font-size:12.5px;letter-spacing:-0.352px;color:#222;">Drawing Tools</span>
<span class="t " style="left:749.40px;top:129.92px;font-size:12.5px;letter-spacing:-0.538px;color:#b4b4b4;">Rotate</span>
<span class="t " style="left:790.45px;top:129.92px;font-size:12.5px;letter-spacing:-0.121px;color:#b4b4b4;">Alignment</span>
<span class="t " style="left:852.40px;top:129.92px;font-size:12.5px;letter-spacing:-0.410px;color:#b4b4b4;">Arrange</span>
<span class="t " style="left:779.75px;top:162.92px;font-size:12.5px;letter-spacing:-0.221px;color:#222;">Alignment Tools</span>
<span class="t " style="left:910.20px;top:129.92px;font-size:12.5px;letter-spacing:-0.181px;color:#222;">Print</span>
<span class="t " style="left:964.60px;top:95.62px;font-size:12.5px;letter-spacing:-0.580px;color:#222;">Show Page Area</span>
<span class="t " style="left:964.60px;top:119.02px;font-size:12.5px;letter-spacing:-0.218px;color:#222;">Printer Options</span>
<span class="t " style="left:945.20px;top:141.82px;font-size:12.5px;letter-spacing:-0.289px;color:#222;">Clear Print Options</span>
<span class="t " style="left:1069.50px;top:129.92px;font-size:12.5px;letter-spacing:-0.301px;color:#222;">Print</span>
<span class="t " style="left:1064.85px;top:144.02px;font-size:12.5px;letter-spacing:-0.756px;color:#222;">Labels</span>
<span class="t " style="left:981.95px;top:162.92px;font-size:12.5px;letter-spacing:-0.211px;color:#222;">Printing</span>
<span class="t " style="left:1109.85px;top:129.92px;font-size:12.5px;letter-spacing:-0.526px;color:#222;">Link To</span>
<span class="t " style="left:1115.20px;top:144.02px;font-size:12.5px;letter-spacing:-1.225px;color:#222;">BOM</span>
<span class="t " style="left:1159.55px;top:129.92px;font-size:12.5px;letter-spacing:-0.460px;color:#b4b4b4;">Edit</span>
<span class="t " style="left:1207.95px;top:129.92px;font-size:12.5px;letter-spacing:-0.742px;color:#222;">Show</span>
<span class="t " style="left:1192.35px;top:144.02px;font-size:12.5px;letter-spacing:-0.442px;color:#222;">Connectors</span>
<span class="t " style="left:1169.55px;top:162.92px;font-size:12.5px;letter-spacing:-0.498px;color:#222;">Misc</span>
<div class="a" style="left:616px;top:90px;width:42px;height:68px;border:1px solid #c4c4c4;border-top:none;"></div>
<div class="a" style="left:643px;top:90px;width:1px;height:68px;background:#c4c4c4;"></div>
<div class="a" style="left:643px;top:113px;width:15px;height:1px;background:#c4c4c4;"></div>
<div class="a" style="left:643px;top:136px;width:15px;height:1px;background:#c4c4c4;"></div>
<div class="a" style="left:662px;top:113px;width:40px;height:22px;background:#fff;border:1px solid #c0c0c0;"></div>
<div class="a" style="left:666px;top:118px;width:15px;height:12px;background:#000;"></div>
<div class="a" style="left:685px;top:115px;width:15px;height:18px;background:#ececec;border:1px solid #b0b0b0;"></div>
<div class="a" style="left:662px;top:136px;width:40px;height:22px;background:#fff;border:1px solid #c0c0c0;"></div>
<div class="a" style="left:666px;top:141px;width:15px;height:12px;background:#000;"></div>
<div class="a" style="left:685px;top:138px;width:15px;height:18px;background:#ececec;border:1px solid #b0b0b0;"></div>
<div class="a" style="left:351px;top:184px;width:1109px;height:801px;border:1px solid #b4b4b4;"></div>
<div class="a" style="left:351px;top:211px;width:1109px;height:1px;background:#b4b4b4;"></div>
<div class="a" style="left:363px;top:187px;width:1034px;height:22px;background:#fff;border:1px solid #a8a8a8;"></div>
<span class="t " style="left:368.20px;top:193.22px;font-size:12.5px;letter-spacing:-0.403px;color:#222;">Wide Screen - Assembly</span>
<div class="a" style="left:1402px;top:189px;width:18px;height:18px;background:#cfcfcf;border:1px solid #8a8a8a;"></div>
<div class="a" style="left:1425px;top:189px;width:18px;height:18px;background:#d4e6f8;border:1px solid #4a98e8;"></div>
<svg class="a" style="left:340px;top:85px;" width="1130" height="130" viewBox="340 85 1130 130"><defs><radialGradient id="gi" cx="0.5" cy="0.3" r="0.8"><stop offset="0" stop-color="#8fdc7c"/><stop offset="0.6" stop-color="#3cae38"/><stop offset="1" stop-color="#2a8c2c"/></radialGradient><linearGradient id="gp" x1="0" y1="0" x2="1" y2="1"><stop offset="0" stop-color="#d8f0c0"/><stop offset="1" stop-color="#9ad49a"/></linearGradient></defs><circle cx="369.5" cy="108.3" r="13.6" fill="#fafafa" stroke="#6a6a6a" stroke-width="1.5"/><circle cx="369.5" cy="108.3" r="11.2" fill="url(#gi)" stroke="#5a5a5a" stroke-width="1"/><path d="M362.4 105.6 H369.8 V102 L377.6 108.3 L369.8 114.6 V111 H362.4 Z" fill="#fff"/><path fill="#000" d="M366.9 149.2 h6 l-3 3 Z"/><g><path d="M405.4 101.6 H417.6 V105.2 H414.2 V120.4 H409.4 V105.2 H405.4 Z" fill="#111" opacity="0.85" filter="url(#bl)"/><filter id="bl"><feGaussianBlur stdDeviation="0.9"/></filter><path d="M403 99.8 H414.8 V103.6 H411.4 V118.2 H406.2 V103.6 H403 Z" fill="#2e2e2e"/><path d="M406.2 103.6 H408 V118.2 H406.2 Z" fill="#5a5a5a"/><rect x="406.2" y="110.6" width="5.2" height="1" fill="#666"/></g><g opacity="0.45"><rect x="439" y="95.4" width="15" height="22.6" rx="1.4" fill="#e8c070" stroke="#c09840" stroke-width="0.7"/><rect x="443.4" y="93.8" width="6.4" height="3.4" rx="1" fill="#999"/><path d="M443.6 100.8 L457 102 V123.2 L443.6 122 Z" fill="#f2f2f2" stroke="#bbb" stroke-width="0.8"/></g><path fill="#c0c0c0" d="M444.8 149.2 h6 l-3 3 Z"/><g transform="translate(473.6 94.4)" opacity="0.35"><path d="M1.6 0.4 L7.4 9.4 M9.4 0.4 L3.6 9.4" stroke="#777" stroke-width="1" fill="none"/><ellipse cx="2.6" cy="11" rx="1.6" ry="2.2" fill="none" stroke="#c8303a" stroke-width="1.1" transform="rotate(25 2.6 11)"/><ellipse cx="8.4" cy="11" rx="1.6" ry="2.2" fill="none" stroke="#c8303a" stroke-width="1.1" transform="rotate(-25 8.4 11)"/></g><g transform="translate(473.6 117) scale(1.05)" opacity="0.35"><rect x="3.6" y="0.6" width="7" height="9" fill="#e8f0fa" stroke="#5a7aa8" stroke-width="0.8"/><rect x="0.6" y="3" width="7" height="9.4" fill="#f4f8fd" stroke="#5a7aa8" stroke-width="0.8"/></g><g opacity="1"><circle cx="478.9" cy="147" r="6.45" fill="#f4f4f4" stroke="#555" stroke-width="1.5"/><circle cx="478.9" cy="147" r="4.8" fill="#d8202a"/><g transform="translate(478.9 147)"><path stroke="#fff" stroke-width="2" d="M-3.2 0 H3.2"/></g></g><path fill="#444" d="M516.3 147.2 h6 l-3 3 Z"/><g opacity="0.5"><path d="M566 99.6 L573.6 96 L581 99 V107.6 L573.4 111.2 L566 108 Z" fill="#e88a9a"/><path d="M566 99.6 L573.4 102.6 L581 99 L573.6 96 Z" fill="#f4b4c0"/><path d="M573.4 102.6 V111.2" stroke="#d06a7a" stroke-width="0.6"/><path d="M585.4 96.4 L594.4 113 Q588 118 580 115.4 Z" fill="#7ad0ec"/><path d="M585.4 96.4 L588.4 116.4 Q592 115.4 594.4 113 Z" fill="#a8e4f6"/><circle cx="576" cy="115" r="7.4" fill="#a678dc"/><circle cx="574" cy="112.6" r="3.4" fill="#e0ccf8"/></g><rect x="622.6" y="96.6" width="13.4" height="13.8" rx="1" fill="#b8b4b4" stroke="#1e5a9c" stroke-width="1.3"/><rect x="622.6" y="119.6" width="13.4" height="13.8" rx="4" fill="#b8b4b4" stroke="#1e5a9c" stroke-width="1.3"/><clipPath id="cg"><rect x="617" y="136" width="26" height="19.6"/></clipPath><ellipse cx="629.4" cy="149.4" rx="5.4" ry="7.2" fill="#b8b4b4" stroke="#1e5a9c" stroke-width="1.3" clip-path="url(#cg)"/><path d="M647.4 103.6 h6 l-3 -3.4 Z" fill="#b8b8b8"/><path d="M647.2 123.4 h6.4 l-3.2 3.6 Z" fill="#333"/><path d="M647.2 146.4 h6.4 l-3.2 3.6 Z M647.2 144 h6.4 v1.2 h-6.4 Z" fill="#333"/><g fill="#000"><rect x="663" y="92.8" width="13.4" height="2"/><rect x="663" y="96.4" width="13.4" height="3"/><rect x="663" y="100.8" width="13.4" height="3.4"/><rect x="663" y="105.4" width="13.4" height="3.6"/></g><path fill="#000" d="M683.9 100 h6 l-3 3 Z"/><path d="M688.6 122 l3.9 4.2 l3.9 -4.2" fill="none" stroke="#444" stroke-width="1.2"/><path d="M688.6 145 l3.9 4.2 l3.9 -4.2" fill="none" stroke="#444" stroke-width="1.2"/><rect x="709.8" y="96.8" width="11.4" height="11.4" fill="#dfe6fa" stroke="#1a34a8" stroke-width="1.5"/><circle cx="718.6" cy="99.6" r="6.4" fill="#d83020"/><circle cx="717" cy="97.6" r="2.2" fill="#f08a78"/><path d="M709.8 102 V108.2 H721.2 V105" fill="none" stroke="#1a34a8" stroke-width="1.5"/><path fill="#000" d="M730.7 100 h6 l-3 3 Z"/><g opacity="0.55"><path d="M758.6 119.4 A13 13 0 1 1 773.8 119.4" fill="none" stroke="#6cbe60" stroke-width="3.6"/><path d="M753.4 113.6 L762.6 115 L759.8 122.6 Z" fill="#6cbe60"/><path d="M762 122 H772" stroke="#d8d8d8" stroke-width="1.4"/></g><path fill="#c0c0c0" d="M762.8 149.2 h6 l-3 3 Z"/><g opacity="0.6"><rect x="802" y="93.2" width="2.6" height="30.4" rx="1.2" fill="#c4c4c4" stroke="#999" stroke-width="0.6"/><rect x="806.8" y="95.6" width="16.8" height="10.6" fill="url(#gp)" stroke="#6aae7a" stroke-width="1"/><rect x="818.6" y="109.6" width="13.2" height="10.8" fill="url(#gp)" stroke="#6aae7a" stroke-width="1"/><path d="M806.4 114.8 L812 110.6 V113 H817.6 V116.8 H812 V119.2 Z" fill="#f8c060"/></g><path fill="#c0c0c0" d="M814.4 149.2 h6 l-3 3 Z"/><g opacity="0.5"><rect x="860.2" y="93.6" width="20" height="17" rx="1.6" fill="#f0f4f8" stroke="#b4c4d4" stroke-width="0.9"/><rect x="860.2" y="93.6" width="20" height="3.4" rx="1.4" fill="#ccd8e6"/><rect x="863" y="104" width="20.6" height="19.4" rx="1.6" fill="#f2f6fa" stroke="#b4c4d4" stroke-width="0.9"/><rect x="863" y="104" width="20.6" height="3.6" rx="1.4" fill="#ccd8e6"/></g><path fill="#c0c0c0" d="M870 149.2 h6 l-3 3 Z"/><g transform="translate(906 95)"><path d="M15.4 1.2 L25.6 0.4 L26.6 10 L16.4 11 Z" fill="#4a4a4a" stroke="#222" stroke-width="0.6"/><path d="M5.6 9.4 Q6.4 7 9 7.4 L27 9.4 Q30.6 10.4 30.6 13 V21 Q30.4 23.6 27.6 24.4 L22 25.4 L3.4 17.6 Q2.4 14 5.6 9.4 Z" fill="#3c3c3c" stroke="#1c1c1c" stroke-width="0.7"/><path d="M12 8.6 L21 10 L19.6 12 L10.6 10.4 Z" fill="#e8e8e8"/><path d="M4.2 15.4 L21.6 20.4 V25.6 L3.4 18 Z" fill="#d8d8d8"/><path d="M21.6 16 Q25 14.6 27 15.6 V23.6 L21.6 25.4 Z" fill="#f0f0f0" stroke="#999" stroke-width="0.5"/><circle cx="24.6" cy="19.6" r="0.9" fill="#24f"/><path d="M8.4 17.2 L21.6 21.4 L13.6 27.8 L0.6 22.6 Z" fill="#bfe8ee" stroke="#444" stroke-width="0.9"/><path d="M9 18.4 L19.6 21.8 L13.4 26.4 L2.8 22.4 Z" fill="#e4f6f8"/></g><g transform="translate(1065 95)"><path d="M15.4 1.2 L25.6 0.4 L26.6 10 L16.4 11 Z" fill="#4a4a4a" stroke="#222" stroke-width="0.6"/><path d="M5.6 9.4 Q6.4 7 9 7.4 L27 9.4 Q30.6 10.4 30.6 13 V21 Q30.4 23.6 27.6 24.4 L22 25.4 L3.4 17.6 Q2.4 14 5.6 9.4 Z" fill="#3c3c3c" stroke="#1c1c1c" stroke-width="0.7"/><path d="M12 8.6 L21 10 L19.6 12 L10.6 10.4 Z" fill="#e8e8e8"/><path d="M4.2 15.4 L21.6 20.4 V25.6 L3.4 18 Z" fill="#d8d8d8"/><path d="M21.6 16 Q25 14.6 27 15.6 V23.6 L21.6 25.4 Z" fill="#f0f0f0" stroke="#999" stroke-width="0.5"/><circle cx="24.6" cy="19.6" r="0.9" fill="#24f"/><path d="M8.4 17.2 L21.6 21.4 L13.6 27.8 L0.6 22.6 Z" fill="#bfe8ee" stroke="#444" stroke-width="0.9"/><path d="M9 18.4 L19.6 21.8 L13.4 26.4 L2.8 22.4 Z" fill="#e4f6f8"/></g><path d="M949.4 95 L956.6 95.8 V106.6 L949.4 105.6 Z" fill="#c4dcf4" stroke="#a4c4e8" stroke-width="0.6"/><g><rect x="948.4" y="119.6" width="6.4" height="4" fill="#e8e8f4" stroke="#5a6aa8" stroke-width="0.7"/><rect x="945.4" y="122.8" width="12.6" height="5.4" rx="1" fill="#c8d0ec" stroke="#4a5a9a" stroke-width="0.8"/><rect x="947.8" y="126.8" width="7.8" height="3.4" fill="#f4f4fc" stroke="#5a6aa8" stroke-width="0.6"/><circle cx="956.6" cy="121.4" r="3.9" fill="#58b828" stroke="#2a7a10" stroke-width="0.6"/><text x="956.6" y="123.8" font-size="6.4" font-weight="bold" text-anchor="middle" fill="#fff" font-family="Liberation Sans, sans-serif">?</text></g><path fill="#333" d="M1051 123.2 h6 l-3 3 Z"/><g><path d="M1113.2 100 L1125.8 95.8 V117.6 L1113.2 122 Z" fill="#7a1c22" stroke="#4a0c10" stroke-width="0.6"/><path d="M1114.6 101.6 L1120 99.8 V118.6 L1114.6 120.4 Z" fill="#a03038" opacity="0.6"/><path d="M1125.8 95.8 L1139.2 98.4 V120.2 L1125.8 117.6 Z" fill="#f4f4f4" stroke="#777" stroke-width="0.7"/><path d="M1127.6 99.6 L1137.6 101.6 M1127.6 102.6 L1137.6 104.6 M1127.6 105.6 L1137.6 107.6 M1127.6 108.6 L1137.6 110.6 M1127.6 111.6 L1137.6 113.6 M1127.6 114.6 L1137.6 116.6" stroke="#9a9a9a" stroke-width="0.8"/><rect x="1138.4" y="100.4" width="2.4" height="3.6" fill="#c82020"/><rect x="1138.4" y="104.8" width="2.8" height="3.8" fill="#20b830"/><rect x="1138.4" y="109.4" width="2.6" height="3.6" fill="#f08020"/><rect x="1139" y="113.8" width="3" height="4" fill="#1030d8"/><path d="M1134 117 L1138.6 113.8 V119.6 Z" fill="#ddd" stroke="#888" stroke-width="0.4"/></g><g opacity="0.55"><path d="M1157.4 95.4 L1171.4 97.6 V122.2 L1157.4 119.6 Z" fill="#e4eef8" stroke="#a8c4e0" stroke-width="0.9"/><path d="M1155 120.6 L1171.4 123" stroke="#c8c8c8" stroke-width="1.2"/><path d="M1181 94.6 L1182.8 96.2 L1163.4 114.6 L1160.6 115.8 L1161.6 113 Z" fill="#e0e0e0" stroke="#9a9a9a" stroke-width="0.9"/></g><g fill="none" stroke="#555" stroke-width="1.2"><path d="M1210 120.8 L1233.8 97"/><path d="M1208.4 109.4 C1208.4 93 1222 93 1222 108.8 C1222 124.6 1235.6 124.6 1235.6 108.4" stroke="#777"/></g><rect x="1207.3" y="119.7" width="3.8" height="3.8" rx="0.6" fill="#e4e4e4" stroke="#888" stroke-width="0.8"/><rect x="1232.6" y="94.5" width="3.8" height="3.8" rx="0.6" fill="#e4e4e4" stroke="#888" stroke-width="0.8"/><rect x="1206.5" y="107.5" width="3.8" height="3.8" rx="0.6" fill="#e4e4e4" stroke="#888" stroke-width="0.8"/><rect x="1233.7" y="106.5" width="3.8" height="3.8" rx="0.6" fill="#e4e4e4" stroke="#888" stroke-width="0.8"/><rect x="1219.4" y="106.2" width="5.4" height="5.4" fill="#5a5654" stroke="#333" stroke-width="0.8"/><g><rect x="1406.4" y="192" width="9" height="7.6" rx="0.8" fill="#222"/><rect x="1405" y="194.6" width="9.4" height="8.8" rx="0.8" fill="#222" stroke="#cfcfcf" stroke-width="0.7"/><rect x="1406.2" y="197.4" width="3.6" height="4.6" fill="#cfcfcf"/><rect x="1410.6" y="197.4" width="2.6" height="4.6" fill="#eee"/></g><g><rect x="1428.6" y="193" width="8.4" height="10.6" fill="#f4f8fc" stroke="#6a8ab8" stroke-width="0.8"/><path d="M1439.4 191 L1440.6 192.2 L1434 200 L1432.4 200.8 L1432.8 199 Z" fill="#999" stroke="#666" stroke-width="0.5"/></g></svg>
<div class="a" style="left:356px;top:223px;width:22px;height:22px;background:#a9cbf2;"></div>
<div class="a" style="left:358px;top:271px;width:15px;height:1px;background:#c8c8c8;"></div>
<div class="a" style="left:381px;top:222px;width:1027px;height:376px;border:2px solid #000;"></div>
<div class="a" style="left:385px;top:232px;width:298px;height:51.5px;background:#fff;border:2px solid #000;"></div>
<div class="a" style="left:385px;top:286px;width:298px;height:32px;background:#fff;border:2px solid #000;"></div>
<div class="a" style="left:687px;top:232px;width:298px;height:51.5px;background:#fff;border:2px solid #000;"></div>
<div class="a" style="left:687px;top:286px;width:298px;height:32px;background:#fff;border:2px solid #000;"></div>
<div class="a" style="left:992px;top:231px;width:169px;height:87px;background:#fff;border:2px solid #000;"></div>
<div class="a" style="left:1167px;top:231px;width:233px;height:87px;background:#fff;border:2px solid #000;"></div>
<span class="t " style="left:391.30px;top:242.65px;font-size:29px;letter-spacing:-1.139px;color:#000;">INFORCE-CNS-01 - 02</span>
<span class="t " style="left:715.00px;top:238.93px;font-size:36px;letter-spacing:-0.711px;color:#000;">Auto Placement</span>
<span class="t " style="left:433.20px;top:296.08px;font-size:15.5px;letter-spacing:-0.048px;color:#000;">Assembly Name and Revision</span>
<span class="t " style="left:750.50px;top:293.98px;font-size:15.5px;letter-spacing:0.181px;color:#000;">Current Operation Name</span>
<svg class="a" style="left:410px;top:360px;" width="420" height="200" viewBox="410 360 420 200"><rect x="417.5" y="367.8" width="402" height="186.5" fill="#fff" stroke="#c8c8c8" stroke-width="1"/><circle cx="429.12" cy="379.12" r="5.11" fill="#c0c0c0"/><circle cx="569.27" cy="392.98" r="4.44" fill="#c0c0c0"/><circle cx="607.06" cy="392.98" r="4.44" fill="#c0c0c0"/><circle cx="603.70" cy="443.28" r="1.75" fill="#c0c0c0"/><rect x="494.35" y="376.43" width="77.34" height="12.10" fill="none" stroke="#e4e4e4" stroke-width="0.6"/><rect x="430.47" y="434.27" width="20.17" height="11.70" fill="none" stroke="#e4e4e4" stroke-width="0.6"/><rect x="441.50" y="370.11" width="7.13" height="10.76" fill="#c0c0c0" /><rect x="421.46" y="406.43" width="6.99" height="11.30" fill="#c0c0c0" /><rect x="452.66" y="376.43" width="3.09" height="2.42" fill="#c0c0c0" /><rect x="452.66" y="380.20" width="3.09" height="2.69" fill="#c0c0c0" /><rect x="458.04" y="379.79" width="2.69" height="3.09" fill="#c0c0c0" /><rect x="462.07" y="379.79" width="2.96" height="3.09" fill="#c0c0c0" /><rect x="447.28" y="385.17" width="2.69" height="2.96" fill="#c0c0c0" /><rect x="452.26" y="385.17" width="2.69" height="2.96" fill="#c0c0c0" /><rect x="447.28" y="390.55" width="2.69" height="3.09" fill="#c0c0c0" /><rect x="452.26" y="390.55" width="2.69" height="3.09" fill="#c0c0c0" /><rect x="438.13" y="388.94" width="2.42" height="2.69" fill="#c0c0c0" /><rect x="442.57" y="388.94" width="2.29" height="2.69" fill="#c0c0c0" /><rect x="457.10" y="385.85" width="7.67" height="6.72" fill="#c0c0c0" /><rect x="452.66" y="396.34" width="3.09" height="2.29" fill="#c0c0c0" /><rect x="458.04" y="396.34" width="2.69" height="2.69" fill="#c0c0c0" /><rect x="462.07" y="396.34" width="2.96" height="2.69" fill="#c0c0c0" /><rect x="452.66" y="400.24" width="3.09" height="2.15" fill="#c0c0c0" /><rect x="436.25" y="399.97" width="2.69" height="2.69" fill="#c0c0c0" /><rect x="440.29" y="399.97" width="2.69" height="2.69" fill="#c0c0c0" /><rect x="433.16" y="406.96" width="2.02" height="2.69" fill="#c0c0c0" /><rect x="436.12" y="406.96" width="2.02" height="2.69" fill="#c0c0c0" /><rect x="438.94" y="406.96" width="1.88" height="2.69" fill="#c0c0c0" /><rect x="433.16" y="414.36" width="2.02" height="2.82" fill="#c0c0c0" /><rect x="436.12" y="414.36" width="2.02" height="2.82" fill="#c0c0c0" /><rect x="438.94" y="414.36" width="1.88" height="2.82" fill="#c0c0c0" /><rect x="434.91" y="419.88" width="2.29" height="2.69" fill="#c0c0c0" /><rect x="438.94" y="419.88" width="2.29" height="2.69" fill="#c0c0c0" /><rect x="473.78" y="379.12" width="3.09" height="3.36" fill="#c0c0c0" /><rect x="471.22" y="385.17" width="2.69" height="2.69" fill="#c0c0c0" /><rect x="476.20" y="385.17" width="2.69" height="2.69" fill="#c0c0c0" /><rect x="486.28" y="379.12" width="2.96" height="3.36" fill="#c0c0c0" /><rect x="484.00" y="385.17" width="2.69" height="2.69" fill="#c0c0c0" /><rect x="488.97" y="385.17" width="2.69" height="2.69" fill="#c0c0c0" /><rect x="484.00" y="390.55" width="2.29" height="2.69" fill="#c0c0c0" /><rect x="488.03" y="390.55" width="2.29" height="2.69" fill="#c0c0c0" /><rect x="495.30" y="384.23" width="4.17" height="4.30" fill="#c0c0c0" /><rect x="567.25" y="384.23" width="4.17" height="4.30" fill="#c0c0c0" /><rect x="583.80" y="374.15" width="2.69" height="2.69" fill="#c0c0c0" /><rect x="587.83" y="374.15" width="2.69" height="2.69" fill="#c0c0c0" /><rect x="576.13" y="380.20" width="8.07" height="2.29" fill="#c0c0c0" /><rect x="576.13" y="383.83" width="8.07" height="2.29" fill="#c0c0c0" /><rect x="576.13" y="387.46" width="8.07" height="2.29" fill="#c0c0c0" /><rect x="576.13" y="391.09" width="8.07" height="2.29" fill="#c0c0c0" /><rect x="590.52" y="380.20" width="8.07" height="2.29" fill="#c0c0c0" /><rect x="590.52" y="383.83" width="8.07" height="2.29" fill="#c0c0c0" /><rect x="590.52" y="387.46" width="8.07" height="2.29" fill="#c0c0c0" /><rect x="590.52" y="391.09" width="8.07" height="2.29" fill="#c0c0c0" /><rect x="602.36" y="401.72" width="2.96" height="2.69" fill="#c0c0c0" /><rect x="602.36" y="406.02" width="2.96" height="2.69" fill="#c0c0c0" /><rect x="609.62" y="401.72" width="3.09" height="2.69" fill="#c0c0c0" /><rect x="609.62" y="406.02" width="3.09" height="2.69" fill="#c0c0c0" /><rect x="609.62" y="410.33" width="3.09" height="2.69" fill="#c0c0c0" /><rect x="609.62" y="414.36" width="3.09" height="2.69" fill="#c0c0c0" /><rect x="600.61" y="419.88" width="2.42" height="2.29" fill="#c0c0c0" /><rect x="604.64" y="419.88" width="2.42" height="2.29" fill="#c0c0c0" /><rect x="599.26" y="425.26" width="2.02" height="2.69" fill="#c0c0c0" /><rect x="602.22" y="425.26" width="2.02" height="2.69" fill="#c0c0c0" /><rect x="605.05" y="425.26" width="2.02" height="2.69" fill="#c0c0c0" /><rect x="599.26" y="432.92" width="2.02" height="2.69" fill="#c0c0c0" /><rect x="602.22" y="432.92" width="2.02" height="2.69" fill="#c0c0c0" /><rect x="605.05" y="432.92" width="2.02" height="2.69" fill="#c0c0c0" /><rect x="601.28" y="448.66" width="4.71" height="4.03" fill="#c0c0c0" /><rect x="425.36" y="436.28" width="3.09" height="2.42" fill="#c0c0c0" /><rect x="425.36" y="440.32" width="3.09" height="2.42" fill="#c0c0c0" /><rect x="451.99" y="436.28" width="2.96" height="2.42" fill="#c0c0c0" /><rect x="451.99" y="440.32" width="2.96" height="2.42" fill="#c0c0c0" /><rect x="438.13" y="459.15" width="6.72" height="8.07" fill="#c0c0c0" /><rect x="451.05" y="457.54" width="6.72" height="9.68" fill="#c0c0c0" /><rect x="509.15" y="462.11" width="2.96" height="2.69" fill="#c0c0c0" /><rect x="501.40" y="376.16" width="2.04" height="2.69" fill="#c0c0c0" /><rect x="504.09" y="376.16" width="2.04" height="2.69" fill="#c0c0c0" /><rect x="506.78" y="376.16" width="2.04" height="2.69" fill="#c0c0c0" /><rect x="509.47" y="376.16" width="2.04" height="2.69" fill="#c0c0c0" /><rect x="512.16" y="376.16" width="2.04" height="2.69" fill="#c0c0c0" /><rect x="514.85" y="376.16" width="2.04" height="2.69" fill="#c0c0c0" /><rect x="517.54" y="376.16" width="2.04" height="2.69" fill="#c0c0c0" /><rect x="520.23" y="376.16" width="2.04" height="2.69" fill="#c0c0c0" /><rect x="522.92" y="376.16" width="2.04" height="2.69" fill="#c0c0c0" /><rect x="525.61" y="376.16" width="2.04" height="2.69" fill="#c0c0c0" /><rect x="528.30" y="376.16" width="2.04" height="2.69" fill="#c0c0c0" /><rect x="530.99" y="376.16" width="2.04" height="2.69" fill="#c0c0c0" /><rect x="533.68" y="376.16" width="2.04" height="2.69" fill="#c0c0c0" /><rect x="536.37" y="376.16" width="2.04" height="2.69" fill="#c0c0c0" /><rect x="539.06" y="376.16" width="2.04" height="2.69" fill="#c0c0c0" /><rect x="541.75" y="376.16" width="2.04" height="2.69" fill="#c0c0c0" /><rect x="544.44" y="376.16" width="2.04" height="2.69" fill="#c0c0c0" /><rect x="547.13" y="376.16" width="2.04" height="2.69" fill="#c0c0c0" /><rect x="549.82" y="376.16" width="2.04" height="2.69" fill="#c0c0c0" /><rect x="552.51" y="376.16" width="2.04" height="2.69" fill="#c0c0c0" /><rect x="555.20" y="376.16" width="2.04" height="2.69" fill="#c0c0c0" /><rect x="557.89" y="376.16" width="2.04" height="2.69" fill="#c0c0c0" /><rect x="560.58" y="376.16" width="2.04" height="2.69" fill="#c0c0c0" /><rect x="563.27" y="376.16" width="2.04" height="2.69" fill="#c0c0c0" /><rect x="431.37" y="429.29" width="1.45" height="4.57" fill="#c0c0c0" /><rect x="433.28" y="429.29" width="1.45" height="4.57" fill="#c0c0c0" /><rect x="435.19" y="429.29" width="1.45" height="4.57" fill="#c0c0c0" /><rect x="437.10" y="429.29" width="1.45" height="4.57" fill="#c0c0c0" /><rect x="439.01" y="429.29" width="1.45" height="4.57" fill="#c0c0c0" /><rect x="440.92" y="429.29" width="1.45" height="4.57" fill="#c0c0c0" /><rect x="442.83" y="429.29" width="1.45" height="4.57" fill="#c0c0c0" /><rect x="444.74" y="429.29" width="1.45" height="4.57" fill="#c0c0c0" /><rect x="446.65" y="429.29" width="1.45" height="4.57" fill="#c0c0c0" /><rect x="448.56" y="429.29" width="1.45" height="4.57" fill="#c0c0c0" /><rect x="431.37" y="446.37" width="1.45" height="4.71" fill="#c0c0c0" /><rect x="433.28" y="446.37" width="1.45" height="4.71" fill="#c0c0c0" /><rect x="435.19" y="446.37" width="1.45" height="4.71" fill="#c0c0c0" /><rect x="437.10" y="446.37" width="1.45" height="4.71" fill="#c0c0c0" /><rect x="439.01" y="446.37" width="1.45" height="4.71" fill="#c0c0c0" /><rect x="440.92" y="446.37" width="1.45" height="4.71" fill="#c0c0c0" /><rect x="442.83" y="446.37" width="1.45" height="4.71" fill="#c0c0c0" /><rect x="444.74" y="446.37" width="1.45" height="4.71" fill="#c0c0c0" /><rect x="446.65" y="446.37" width="1.45" height="4.71" fill="#c0c0c0" /><rect x="448.56" y="446.37" width="1.45" height="4.71" fill="#c0c0c0" /><rect x="431.81" y="405.35" width="10.76" height="13.45" fill="none" stroke="#e4e4e4" stroke-width="0.6"/><rect x="597.92" y="423.51" width="10.36" height="13.45" fill="none" stroke="#e4e4e4" stroke-width="0.6"/><rect x="599.94" y="439.65" width="7.67" height="14.12" fill="none" stroke="#e4e4e4" stroke-width="0.6"/><path d="M423.09 395.67 h4 M425.09 393.67 v4" stroke="#d0d0d0" stroke-width="0.5"/><rect x="456.02" y="428.21" width="23.81" height="22.46" fill="#ec008c" /><rect x="457.05" y="429.29" width="1.41" height="5.65" fill="#1a0010" /><rect x="458.90" y="429.29" width="1.41" height="5.65" fill="#1a0010" /><rect x="460.75" y="429.29" width="1.41" height="5.65" fill="#1a0010" /><rect x="462.60" y="429.29" width="1.41" height="5.65" fill="#1a0010" /><rect x="464.45" y="429.29" width="1.41" height="5.65" fill="#1a0010" /><rect x="466.30" y="429.29" width="1.41" height="5.65" fill="#1a0010" /><rect x="468.15" y="429.29" width="1.41" height="5.65" fill="#1a0010" /><rect x="470.00" y="429.29" width="1.41" height="5.65" fill="#1a0010" /><rect x="471.85" y="429.29" width="1.41" height="5.65" fill="#1a0010" /><rect x="473.70" y="429.29" width="1.41" height="5.65" fill="#1a0010" /><rect x="475.54" y="429.29" width="1.41" height="5.65" fill="#1a0010" /><rect x="477.39" y="429.29" width="1.41" height="5.65" fill="#1a0010" /><rect x="457.05" y="444.35" width="1.41" height="5.65" fill="#1a0010" /><rect x="458.90" y="444.35" width="1.41" height="5.65" fill="#1a0010" /><rect x="460.75" y="444.35" width="1.41" height="5.65" fill="#1a0010" /><rect x="462.60" y="444.35" width="1.41" height="5.65" fill="#1a0010" /><rect x="464.45" y="444.35" width="1.41" height="5.65" fill="#1a0010" /><rect x="466.30" y="444.35" width="1.41" height="5.65" fill="#1a0010" /><rect x="468.15" y="444.35" width="1.41" height="5.65" fill="#1a0010" /><rect x="470.00" y="444.35" width="1.41" height="5.65" fill="#1a0010" /><rect x="471.85" y="444.35" width="1.41" height="5.65" fill="#1a0010" /><rect x="473.70" y="444.35" width="1.41" height="5.65" fill="#1a0010" /><rect x="475.54" y="444.35" width="1.41" height="5.65" fill="#1a0010" /><rect x="477.39" y="444.35" width="1.41" height="5.65" fill="#1a0010" /><rect x="487.09" y="428.21" width="23.81" height="22.46" fill="#ec008c" /><rect x="488.12" y="429.29" width="1.41" height="5.65" fill="#1a0010" /><rect x="489.97" y="429.29" width="1.41" height="5.65" fill="#1a0010" /><rect x="491.82" y="429.29" width="1.41" height="5.65" fill="#1a0010" /><rect x="493.67" y="429.29" width="1.41" height="5.65" fill="#1a0010" /><rect x="495.52" y="429.29" width="1.41" height="5.65" fill="#1a0010" /><rect x="497.37" y="429.29" width="1.41" height="5.65" fill="#1a0010" /><rect x="499.22" y="429.29" width="1.41" height="5.65" fill="#1a0010" /><rect x="501.07" y="429.29" width="1.41" height="5.65" fill="#1a0010" /><rect x="502.92" y="429.29" width="1.41" height="5.65" fill="#1a0010" /><rect x="504.76" y="429.29" width="1.41" height="5.65" fill="#1a0010" /><rect x="506.61" y="429.29" width="1.41" height="5.65" fill="#1a0010" /><rect x="508.46" y="429.29" width="1.41" height="5.65" fill="#1a0010" /><rect x="488.12" y="444.35" width="1.41" height="5.65" fill="#1a0010" /><rect x="489.97" y="444.35" width="1.41" height="5.65" fill="#1a0010" /><rect x="491.82" y="444.35" width="1.41" height="5.65" fill="#1a0010" /><rect x="493.67" y="444.35" width="1.41" height="5.65" fill="#1a0010" /><rect x="495.52" y="444.35" width="1.41" height="5.65" fill="#1a0010" /><rect x="497.37" y="444.35" width="1.41" height="5.65" fill="#1a0010" /><rect x="499.22" y="444.35" width="1.41" height="5.65" fill="#1a0010" /><rect x="501.07" y="444.35" width="1.41" height="5.65" fill="#1a0010" /><rect x="502.92" y="444.35" width="1.41" height="5.65" fill="#1a0010" /><rect x="504.76" y="444.35" width="1.41" height="5.65" fill="#1a0010" /><rect x="506.61" y="444.35" width="1.41" height="5.65" fill="#1a0010" /><rect x="508.46" y="444.35" width="1.41" height="5.65" fill="#1a0010" /><rect x="518.16" y="428.21" width="23.81" height="22.46" fill="#ec008c" /><rect x="519.19" y="429.29" width="1.41" height="5.65" fill="#1a0010" /><rect x="521.04" y="429.29" width="1.41" height="5.65" fill="#1a0010" /><rect x="522.89" y="429.29" width="1.41" height="5.65" fill="#1a0010" /><rect x="524.74" y="429.29" width="1.41" height="5.65" fill="#1a0010" /><rect x="526.59" y="429.29" width="1.41" height="5.65" fill="#1a0010" /><rect x="528.44" y="429.29" width="1.41" height="5.65" fill="#1a0010" /><rect x="530.29" y="429.29" width="1.41" height="5.65" fill="#1a0010" /><rect x="532.14" y="429.29" width="1.41" height="5.65" fill="#1a0010" /><rect x="533.98" y="429.29" width="1.41" height="5.65" fill="#1a0010" /><rect x="535.83" y="429.29" width="1.41" height="5.65" fill="#1a0010" /><rect x="537.68" y="429.29" width="1.41" height="5.65" fill="#1a0010" /><rect x="539.53" y="429.29" width="1.41" height="5.65" fill="#1a0010" /><rect x="519.19" y="444.35" width="1.41" height="5.65" fill="#1a0010" /><rect x="521.04" y="444.35" width="1.41" height="5.65" fill="#1a0010" /><rect x="522.89" y="444.35" width="1.41" height="5.65" fill="#1a0010" /><rect x="524.74" y="444.35" width="1.41" height="5.65" fill="#1a0010" /><rect x="526.59" y="444.35" width="1.41" height="5.65" fill="#1a0010" /><rect x="528.44" y="444.35" width="1.41" height="5.65" fill="#1a0010" /><rect x="530.29" y="444.35" width="1.41" height="5.65" fill="#1a0010" /><rect x="532.14" y="444.35" width="1.41" height="5.65" fill="#1a0010" /><rect x="533.98" y="444.35" width="1.41" height="5.65" fill="#1a0010" /><rect x="535.83" y="444.35" width="1.41" height="5.65" fill="#1a0010" /><rect x="537.68" y="444.35" width="1.41" height="5.65" fill="#1a0010" /><rect x="539.53" y="444.35" width="1.41" height="5.65" fill="#1a0010" /><rect x="549.10" y="428.21" width="23.81" height="22.46" fill="#ec008c" /><rect x="550.12" y="429.29" width="1.41" height="5.65" fill="#1a0010" /><rect x="551.97" y="429.29" width="1.41" height="5.65" fill="#1a0010" /><rect x="553.82" y="429.29" width="1.41" height="5.65" fill="#1a0010" /><rect x="555.67" y="429.29" width="1.41" height="5.65" fill="#1a0010" /><rect x="557.52" y="429.29" width="1.41" height="5.65" fill="#1a0010" /><rect x="559.37" y="429.29" width="1.41" height="5.65" fill="#1a0010" /><rect x="561.22" y="429.29" width="1.41" height="5.65" fill="#1a0010" /><rect x="563.07" y="429.29" width="1.41" height="5.65" fill="#1a0010" /><rect x="564.92" y="429.29" width="1.41" height="5.65" fill="#1a0010" /><rect x="566.77" y="429.29" width="1.41" height="5.65" fill="#1a0010" /><rect x="568.62" y="429.29" width="1.41" height="5.65" fill="#1a0010" /><rect x="570.47" y="429.29" width="1.41" height="5.65" fill="#1a0010" /><rect x="550.12" y="444.35" width="1.41" height="5.65" fill="#1a0010" /><rect x="551.97" y="444.35" width="1.41" height="5.65" fill="#1a0010" /><rect x="553.82" y="444.35" width="1.41" height="5.65" fill="#1a0010" /><rect x="555.67" y="444.35" width="1.41" height="5.65" fill="#1a0010" /><rect x="557.52" y="444.35" width="1.41" height="5.65" fill="#1a0010" /><rect x="559.37" y="444.35" width="1.41" height="5.65" fill="#1a0010" /><rect x="561.22" y="444.35" width="1.41" height="5.65" fill="#1a0010" /><rect x="563.07" y="444.35" width="1.41" height="5.65" fill="#1a0010" /><rect x="564.92" y="444.35" width="1.41" height="5.65" fill="#1a0010" /><rect x="566.77" y="444.35" width="1.41" height="5.65" fill="#1a0010" /><rect x="568.62" y="444.35" width="1.41" height="5.65" fill="#1a0010" /><rect x="570.47" y="444.35" width="1.41" height="5.65" fill="#1a0010" /><rect x="481.85" y="428.48" width="3.09" height="2.69" fill="#c0c0c0" /><rect x="481.85" y="432.65" width="3.09" height="2.69" fill="#c0c0c0" /><rect x="481.85" y="443.28" width="3.09" height="2.69" fill="#c0c0c0" /><rect x="481.85" y="447.45" width="3.09" height="2.69" fill="#c0c0c0" /><rect x="512.92" y="428.48" width="3.09" height="2.69" fill="#c0c0c0" /><rect x="512.92" y="432.65" width="3.09" height="2.69" fill="#c0c0c0" /><rect x="512.92" y="443.28" width="3.09" height="2.69" fill="#c0c0c0" /><rect x="512.92" y="447.45" width="3.09" height="2.69" fill="#c0c0c0" /><rect x="543.85" y="428.48" width="3.09" height="2.69" fill="#c0c0c0" /><rect x="543.85" y="432.65" width="3.09" height="2.69" fill="#c0c0c0" /><rect x="543.85" y="443.28" width="3.09" height="2.69" fill="#c0c0c0" /><rect x="543.85" y="447.45" width="3.09" height="2.69" fill="#c0c0c0" /><rect x="575.05" y="428.48" width="3.09" height="2.69" fill="#c0c0c0" /><rect x="575.05" y="432.65" width="3.09" height="2.69" fill="#c0c0c0" /><rect x="575.05" y="443.28" width="3.09" height="2.69" fill="#c0c0c0" /><rect x="575.05" y="447.45" width="3.09" height="2.69" fill="#c0c0c0" /><circle cx="631.84" cy="378.85" r="3.23" fill="#c0c0c0"/><circle cx="636.54" cy="388.13" r="4.44" fill="#c0c0c0"/><circle cx="678.10" cy="378.85" r="3.09" fill="#c0c0c0"/><circle cx="673.13" cy="388.13" r="4.44" fill="#c0c0c0"/><circle cx="751.14" cy="372.40" r="3.09" fill="#c0c0c0"/><circle cx="751.14" cy="388.54" r="3.09" fill="#c0c0c0"/><circle cx="806.95" cy="379.12" r="5.11" fill="#c0c0c0"/><circle cx="695.05" cy="392.30" r="3.23" fill="#c0c0c0"/><circle cx="708.63" cy="392.30" r="3.23" fill="#c0c0c0"/><circle cx="722.22" cy="392.30" r="3.23" fill="#c0c0c0"/><circle cx="638.83" cy="411.40" r="2.15" fill="#c0c0c0"/><circle cx="670.84" cy="411.40" r="2.15" fill="#c0c0c0"/><circle cx="640.17" cy="431.85" r="2.02" fill="#c0c0c0"/><circle cx="645.96" cy="431.85" r="2.02" fill="#c0c0c0"/><circle cx="637.22" cy="446.37" r="2.15" fill="#c0c0c0"/><circle cx="644.61" cy="446.37" r="2.15" fill="#c0c0c0"/><circle cx="663.44" cy="431.85" r="2.02" fill="#c0c0c0"/><circle cx="669.36" cy="431.85" r="2.02" fill="#c0c0c0"/><circle cx="660.62" cy="439.11" r="2.02" fill="#c0c0c0"/><circle cx="666.40" cy="439.11" r="2.02" fill="#c0c0c0"/><circle cx="672.19" cy="439.11" r="2.02" fill="#c0c0c0"/><circle cx="665.06" cy="446.37" r="2.15" fill="#c0c0c0"/><circle cx="672.45" cy="446.37" r="2.15" fill="#c0c0c0"/><circle cx="762.30" cy="439.38" r="2.15" fill="#c0c0c0"/><circle cx="768.62" cy="439.38" r="2.15" fill="#c0c0c0"/><circle cx="676.76" cy="462.92" r="2.02" fill="#c0c0c0"/><circle cx="704.06" cy="446.64" r="2.29" fill="#c0c0c0"/><circle cx="704.06" cy="454.04" r="2.29" fill="#c0c0c0"/><circle cx="711.46" cy="446.64" r="2.29" fill="#c0c0c0"/><circle cx="711.46" cy="454.04" r="2.29" fill="#c0c0c0"/><circle cx="718.59" cy="446.64" r="2.29" fill="#c0c0c0"/><circle cx="718.59" cy="454.04" r="2.29" fill="#c0c0c0"/><circle cx="725.99" cy="446.64" r="2.29" fill="#c0c0c0"/><circle cx="725.99" cy="454.04" r="2.29" fill="#c0c0c0"/><circle cx="733.38" cy="446.64" r="2.29" fill="#c0c0c0"/><circle cx="733.38" cy="454.04" r="2.29" fill="#c0c0c0"/><rect x="721.82" y="416.51" width="13.58" height="14.66" fill="none" stroke="#e4e4e4" stroke-width="0.6"/><rect x="701.64" y="415.84" width="11.16" height="14.66" fill="none" stroke="#e4e4e4" stroke-width="0.6"/><rect x="761.90" y="421.49" width="10.09" height="14.12" fill="none" stroke="#e4e4e4" stroke-width="0.6"/><rect x="800.23" y="443.01" width="10.09" height="14.79" fill="none" stroke="#e4e4e4" stroke-width="0.6"/><rect x="693.03" y="374.15" width="11.03" height="6.72" fill="#c0c0c0" /><rect x="692.23" y="399.30" width="3.77" height="3.63" fill="#c0c0c0" /><rect x="698.28" y="399.30" width="4.03" height="3.63" fill="#c0c0c0" /><rect x="626.05" y="401.99" width="2.69" height="2.42" fill="#c0c0c0" /><rect x="626.05" y="406.02" width="2.69" height="2.42" fill="#c0c0c0" /><rect x="626.05" y="410.33" width="2.69" height="2.42" fill="#c0c0c0" /><rect x="626.05" y="414.36" width="2.69" height="2.42" fill="#c0c0c0" /><rect x="650.93" y="410.06" width="2.69" height="2.69" fill="#c0c0c0" /><rect x="654.97" y="410.06" width="2.69" height="2.69" fill="#c0c0c0" /><rect x="639.23" y="423.51" width="2.69" height="2.69" fill="#c0c0c0" /><rect x="643.13" y="423.51" width="2.69" height="2.69" fill="#c0c0c0" /><rect x="638.43" y="439.24" width="2.69" height="2.69" fill="#c0c0c0" /><rect x="642.19" y="439.24" width="2.69" height="2.69" fill="#c0c0c0" /><rect x="626.05" y="432.25" width="6.72" height="10.76" fill="#c0c0c0" /><rect x="620.00" y="452.69" width="2.96" height="2.69" fill="#c0c0c0" /><rect x="624.03" y="452.69" width="2.69" height="2.69" fill="#c0c0c0" /><rect x="677.16" y="423.10" width="2.69" height="2.69" fill="#c0c0c0" /><rect x="677.16" y="427.54" width="2.69" height="2.69" fill="#c0c0c0" /><rect x="677.16" y="432.25" width="2.69" height="2.69" fill="#c0c0c0" /><rect x="677.16" y="436.28" width="2.69" height="2.69" fill="#c0c0c0" /><rect x="677.16" y="441.26" width="2.69" height="2.69" fill="#c0c0c0" /><rect x="677.16" y="445.43" width="2.69" height="2.69" fill="#c0c0c0" /><rect x="695.05" y="417.45" width="3.63" height="4.03" fill="#c0c0c0" /><rect x="695.05" y="423.78" width="3.63" height="4.03" fill="#c0c0c0" /><rect x="703.12" y="418.13" width="2.02" height="2.69" fill="#c0c0c0" /><rect x="706.08" y="418.13" width="2.02" height="2.69" fill="#c0c0c0" /><rect x="709.04" y="418.13" width="2.02" height="2.69" fill="#c0c0c0" /><rect x="703.12" y="425.52" width="2.02" height="2.69" fill="#c0c0c0" /><rect x="706.08" y="425.52" width="2.02" height="2.69" fill="#c0c0c0" /><rect x="709.04" y="425.52" width="2.02" height="2.69" fill="#c0c0c0" /><rect x="715.09" y="419.07" width="3.77" height="4.03" fill="#c0c0c0" /><rect x="715.09" y="425.26" width="3.77" height="4.03" fill="#c0c0c0" /><rect x="725.31" y="418.40" width="4.71" height="2.15" fill="#c0c0c0" /><rect x="725.31" y="427.27" width="4.71" height="2.15" fill="#c0c0c0" /><rect x="699.09" y="432.52" width="2.69" height="3.09" fill="#c0c0c0" /><rect x="703.12" y="432.52" width="2.69" height="3.09" fill="#c0c0c0" /><rect x="708.10" y="432.52" width="2.69" height="3.09" fill="#c0c0c0" /><rect x="712.13" y="432.52" width="2.69" height="3.09" fill="#c0c0c0" /><rect x="665.46" y="452.42" width="11.43" height="6.72" fill="#c0c0c0" /><rect x="681.20" y="454.44" width="2.42" height="3.09" fill="#c0c0c0" /><rect x="685.50" y="454.44" width="2.42" height="3.09" fill="#c0c0c0" /><rect x="659.00" y="460.23" width="2.96" height="2.29" fill="#c0c0c0" /><rect x="752.21" y="419.74" width="2.69" height="3.09" fill="#c0c0c0" /><rect x="756.11" y="419.74" width="2.69" height="3.09" fill="#c0c0c0" /><rect x="752.21" y="425.12" width="2.69" height="3.09" fill="#c0c0c0" /><rect x="756.11" y="425.12" width="2.69" height="3.09" fill="#c0c0c0" /><rect x="752.21" y="430.50" width="2.69" height="3.09" fill="#c0c0c0" /><rect x="756.11" y="430.50" width="2.69" height="3.09" fill="#c0c0c0" /><rect x="763.24" y="416.11" width="2.69" height="2.69" fill="#c0c0c0" /><rect x="767.28" y="416.11" width="2.69" height="2.69" fill="#c0c0c0" /><rect x="763.24" y="423.51" width="2.42" height="2.69" fill="#c0c0c0" /><rect x="768.35" y="423.51" width="2.42" height="2.69" fill="#c0c0c0" /><rect x="763.24" y="430.90" width="2.02" height="2.69" fill="#c0c0c0" /><rect x="765.93" y="430.90" width="2.02" height="2.69" fill="#c0c0c0" /><rect x="768.62" y="430.90" width="2.02" height="2.69" fill="#c0c0c0" /><rect x="790.41" y="410.33" width="6.46" height="11.16" fill="#c0c0c0" /><rect x="803.19" y="418.13" width="2.69" height="2.69" fill="#c0c0c0" /><rect x="807.22" y="418.13" width="2.69" height="2.69" fill="#c0c0c0" /><rect x="792.16" y="425.26" width="2.69" height="2.69" fill="#c0c0c0" /><rect x="792.16" y="429.56" width="2.69" height="2.69" fill="#c0c0c0" /><rect x="759.21" y="449.33" width="2.69" height="2.69" fill="#c0c0c0" /><rect x="763.24" y="449.33" width="2.69" height="2.69" fill="#c0c0c0" /><rect x="750.20" y="454.44" width="2.69" height="3.36" fill="#c0c0c0" /><rect x="754.23" y="454.44" width="2.69" height="3.36" fill="#c0c0c0" /><rect x="760.15" y="454.44" width="3.77" height="4.03" fill="#c0c0c0" /><rect x="760.15" y="460.49" width="3.77" height="4.71" fill="#c0c0c0" /><rect x="790.41" y="452.69" width="2.42" height="3.09" fill="#c0c0c0" /><rect x="794.45" y="452.69" width="2.42" height="3.09" fill="#c0c0c0" /><rect x="790.41" y="458.07" width="2.42" height="2.69" fill="#c0c0c0" /><rect x="794.45" y="458.07" width="2.42" height="2.69" fill="#c0c0c0" /><rect x="801.30" y="445.43" width="2.02" height="2.69" fill="#c0c0c0" /><rect x="804.26" y="445.43" width="2.02" height="2.69" fill="#c0c0c0" /><rect x="807.22" y="445.43" width="2.02" height="2.69" fill="#c0c0c0" /><rect x="801.30" y="452.69" width="2.02" height="2.69" fill="#c0c0c0" /><rect x="804.26" y="452.69" width="2.02" height="2.69" fill="#c0c0c0" /><rect x="807.22" y="452.69" width="2.02" height="2.69" fill="#c0c0c0" /><rect x="801.57" y="459.82" width="2.42" height="2.69" fill="#c0c0c0" /><rect x="805.61" y="459.82" width="2.42" height="2.69" fill="#c0c0c0" /><path d="M804.28 391.90 h4 M806.28 389.90 v4" stroke="#d0d0d0" stroke-width="0.5"/><rect x="798.88" y="422.16" width="11.84" height="13.72" fill="#1a9a8c" /><rect x="800.23" y="424.18" width="4.03" height="4.03" fill="#000" /><rect x="805.34" y="424.18" width="4.03" height="4.03" fill="#000" /><rect x="800.23" y="429.96" width="4.03" height="4.03" fill="#000" /><rect x="805.34" y="429.96" width="4.03" height="4.03" fill="#000" /><rect x="769.02" y="446.10" width="18.83" height="18.83" fill="#1ca4ea" /><rect x="771.18" y="446.91" width="2.02" height="2.69" fill="#000" /><rect x="771.18" y="461.44" width="2.02" height="2.69" fill="#000" /><rect x="769.83" y="448.25" width="2.69" height="2.02" fill="#000" /><rect x="784.36" y="448.25" width="2.69" height="2.02" fill="#000" /><rect x="773.67" y="446.91" width="2.02" height="2.69" fill="#000" /><rect x="773.67" y="461.44" width="2.02" height="2.69" fill="#000" /><rect x="769.83" y="450.74" width="2.69" height="2.02" fill="#000" /><rect x="784.36" y="450.74" width="2.69" height="2.02" fill="#000" /><rect x="776.15" y="446.91" width="2.02" height="2.69" fill="#000" /><rect x="776.15" y="461.44" width="2.02" height="2.69" fill="#000" /><rect x="769.83" y="453.23" width="2.69" height="2.02" fill="#000" /><rect x="784.36" y="453.23" width="2.69" height="2.02" fill="#000" /><rect x="778.64" y="446.91" width="2.02" height="2.69" fill="#000" /><rect x="778.64" y="461.44" width="2.02" height="2.69" fill="#000" /><rect x="769.83" y="455.72" width="2.69" height="2.02" fill="#000" /><rect x="784.36" y="455.72" width="2.69" height="2.02" fill="#000" /><rect x="781.13" y="446.91" width="2.02" height="2.69" fill="#000" /><rect x="781.13" y="461.44" width="2.02" height="2.69" fill="#000" /><rect x="769.83" y="458.21" width="2.69" height="2.02" fill="#000" /><rect x="784.36" y="458.21" width="2.69" height="2.02" fill="#000" /><rect x="783.62" y="446.91" width="2.02" height="2.69" fill="#000" /><rect x="783.62" y="461.44" width="2.02" height="2.69" fill="#000" /><rect x="769.83" y="460.70" width="2.69" height="2.02" fill="#000" /><rect x="784.36" y="460.70" width="2.69" height="2.02" fill="#000" /><rect x="769.83" y="446.91" width="2.42" height="2.42" fill="#1ca4ea" /><rect x="784.63" y="446.91" width="2.42" height="2.42" fill="#1ca4ea" /><rect x="769.83" y="461.70" width="2.42" height="2.42" fill="#1ca4ea" /><rect x="784.63" y="461.70" width="2.42" height="2.42" fill="#1ca4ea" /><circle cx="778.71" cy="455.38" r="1.61" fill="#000"/><circle cx="510.63" cy="476.14" r="2.02" fill="#c0c0c0"/><circle cx="433.56" cy="519.58" r="2.29" fill="#c0c0c0"/><circle cx="429.12" cy="543.12" r="5.11" fill="#c0c0c0"/><rect x="436.25" y="472.37" width="6.72" height="10.76" fill="#c0c0c0" /><rect x="436.25" y="485.29" width="6.72" height="10.76" fill="#c0c0c0" /><rect x="451.05" y="488.51" width="6.72" height="11.16" fill="#c0c0c0" /><rect x="474.45" y="472.37" width="6.86" height="10.76" fill="#c0c0c0" /><rect x="480.23" y="486.90" width="6.72" height="11.03" fill="#c0c0c0" /><rect x="509.15" y="462.02" width="2.96" height="2.69" fill="#c0c0c0" /><rect x="509.15" y="466.05" width="2.96" height="2.69" fill="#c0c0c0" /><rect x="508.21" y="481.12" width="4.71" height="4.44" fill="#c0c0c0" /><rect x="543.85" y="468.34" width="6.72" height="11.43" fill="#c0c0c0" /><rect x="562.28" y="470.09" width="6.72" height="11.43" fill="#c0c0c0" /><rect x="549.50" y="483.13" width="6.46" height="11.43" fill="#c0c0c0" /><rect x="562.28" y="491.20" width="3.09" height="2.42" fill="#c0c0c0" /><rect x="562.28" y="495.24" width="3.09" height="2.42" fill="#c0c0c0" /><rect x="425.36" y="501.43" width="6.72" height="11.30" fill="#c0c0c0" /><rect x="428.18" y="527.25" width="11.70" height="6.72" fill="#c0c0c0" /><rect x="442.98" y="531.28" width="11.70" height="6.46" fill="#c0c0c0" /><rect x="573.04" y="539.62" width="6.99" height="11.43" fill="#c0c0c0" /><rect x="587.43" y="539.62" width="7.13" height="11.43" fill="#c0c0c0" /><rect x="596.57" y="539.62" width="7.13" height="11.43" fill="#c0c0c0" /><rect x="506.86" y="472.78" width="7.40" height="14.12" fill="none" stroke="#e4e4e4" stroke-width="0.6"/><rect x="568.06" y="488.92" width="6.05" height="8.74" fill="#f4906c" /><rect x="568.06" y="488.92" width="1.75" height="3.09" fill="#000" /><rect x="572.36" y="488.92" width="1.75" height="3.09" fill="#000" /><rect x="568.06" y="495.24" width="6.05" height="2.29" fill="#000" /><rect x="667.75" y="504.38" width="131.81" height="48.02" fill="none" stroke="#e4e4e4" stroke-width="0.6"/><rect x="609.24" y="514.47" width="23.27" height="27.57" fill="none" stroke="#e4e4e4" stroke-width="0.6"/><rect x="711.46" y="472.78" width="16.14" height="12.51" fill="none" stroke="#e4e4e4" stroke-width="0.6"/><circle cx="652.55" cy="466.99" r="2.02" fill="#c0c0c0"/><circle cx="669.09" cy="466.99" r="2.69" fill="#c0c0c0"/><circle cx="676.76" cy="462.96" r="2.02" fill="#c0c0c0"/><circle cx="674.74" cy="510.03" r="3.63" fill="#c0c0c0"/><circle cx="763.64" cy="510.03" r="3.63" fill="#c0c0c0"/><circle cx="674.74" cy="547.42" r="3.63" fill="#c0c0c0"/><circle cx="763.64" cy="547.42" r="3.63" fill="#c0c0c0"/><circle cx="792.56" cy="522.81" r="2.29" fill="#c0c0c0"/><circle cx="792.56" cy="534.38" r="2.29" fill="#c0c0c0"/><circle cx="806.95" cy="542.99" r="5.11" fill="#c0c0c0"/><circle cx="625.65" cy="519.58" r="2.96" fill="#c0c0c0"/><circle cx="651.61" cy="520.12" r="1.88" fill="#c0c0c0"/><rect x="659.00" y="460.00" width="2.96" height="2.42" fill="#c0c0c0" /><rect x="659.00" y="464.03" width="2.96" height="2.69" fill="#c0c0c0" /><rect x="674.47" y="468.07" width="4.71" height="4.71" fill="#c0c0c0" /><rect x="653.22" y="476.14" width="10.76" height="6.99" fill="#c0c0c0" /><rect x="666.13" y="489.19" width="2.69" height="2.69" fill="#c0c0c0" /><rect x="666.13" y="493.22" width="2.69" height="2.69" fill="#c0c0c0" /><rect x="656.99" y="497.93" width="6.72" height="10.76" fill="#c0c0c0" /><rect x="640.17" y="507.07" width="3.77" height="2.69" fill="#c0c0c0" /><rect x="640.17" y="511.11" width="3.77" height="2.69" fill="#c0c0c0" /><rect x="648.24" y="509.36" width="2.69" height="2.42" fill="#c0c0c0" /><rect x="652.28" y="509.36" width="2.69" height="2.42" fill="#c0c0c0" /><rect x="659.41" y="513.13" width="2.69" height="2.69" fill="#c0c0c0" /><rect x="663.31" y="513.13" width="2.69" height="2.69" fill="#c0c0c0" /><rect x="659.41" y="518.24" width="2.69" height="2.69" fill="#c0c0c0" /><rect x="663.31" y="518.24" width="2.69" height="2.69" fill="#c0c0c0" /><rect x="648.24" y="527.25" width="2.69" height="2.69" fill="#c0c0c0" /><rect x="653.62" y="527.25" width="3.36" height="2.69" fill="#c0c0c0" /><rect x="648.24" y="531.28" width="2.69" height="2.69" fill="#c0c0c0" /><rect x="653.62" y="531.28" width="3.36" height="2.69" fill="#c0c0c0" /><rect x="649.32" y="514.47" width="4.98" height="2.42" fill="#c0c0c0" /><rect x="649.32" y="523.21" width="4.98" height="2.42" fill="#c0c0c0" /><rect x="646.63" y="518.10" width="2.02" height="4.44" fill="#c0c0c0" /><rect x="654.70" y="518.10" width="2.02" height="4.44" fill="#c0c0c0" /><rect x="620.00" y="521.87" width="2.69" height="4.98" fill="#c0c0c0" /><rect x="620.00" y="530.61" width="2.69" height="4.98" fill="#c0c0c0" /><rect x="635.06" y="539.62" width="6.72" height="11.43" fill="#c0c0c0" /><rect x="644.21" y="541.78" width="2.96" height="2.69" fill="#c0c0c0" /><rect x="644.21" y="546.08" width="2.96" height="2.69" fill="#c0c0c0" /><rect x="682.95" y="467.40" width="2.29" height="2.69" fill="#c0c0c0" /><rect x="686.98" y="467.40" width="2.69" height="2.69" fill="#c0c0c0" /><rect x="697.34" y="467.40" width="2.42" height="2.69" fill="#c0c0c0" /><rect x="701.37" y="467.40" width="2.69" height="2.69" fill="#c0c0c0" /><rect x="683.21" y="473.05" width="5.78" height="2.42" fill="#c0c0c0" /><rect x="683.21" y="482.19" width="5.78" height="2.42" fill="#c0c0c0" /><rect x="698.01" y="473.05" width="5.78" height="2.42" fill="#c0c0c0" /><rect x="698.01" y="482.19" width="5.78" height="2.42" fill="#c0c0c0" /><rect x="682.27" y="487.30" width="2.69" height="2.96" fill="#c0c0c0" /><rect x="686.31" y="487.30" width="2.69" height="2.96" fill="#c0c0c0" /><rect x="697.07" y="487.30" width="2.69" height="2.96" fill="#c0c0c0" /><rect x="701.10" y="487.30" width="2.69" height="2.96" fill="#c0c0c0" /><rect x="708.10" y="463.63" width="2.42" height="2.69" fill="#c0c0c0" /><rect x="712.13" y="463.63" width="2.42" height="2.69" fill="#c0c0c0" /><rect x="730.02" y="482.19" width="2.96" height="2.69" fill="#c0c0c0" /><rect x="730.02" y="486.23" width="2.96" height="2.69" fill="#c0c0c0" /><rect x="710.11" y="494.57" width="2.69" height="3.09" fill="#c0c0c0" /><rect x="714.15" y="494.57" width="2.69" height="3.09" fill="#c0c0c0" /><rect x="720.47" y="494.57" width="2.69" height="3.09" fill="#c0c0c0" /><rect x="724.51" y="494.57" width="2.69" height="3.09" fill="#c0c0c0" /><rect x="715.23" y="499.95" width="2.69" height="2.69" fill="#c0c0c0" /><rect x="719.26" y="499.95" width="2.69" height="2.69" fill="#c0c0c0" /><rect x="750.20" y="461.34" width="6.72" height="11.43" fill="#c0c0c0" /><rect x="759.88" y="460.67" width="4.03" height="4.03" fill="#c0c0c0" /><rect x="759.21" y="467.40" width="2.69" height="2.69" fill="#c0c0c0" /><rect x="763.24" y="467.40" width="2.69" height="2.69" fill="#c0c0c0" /><rect x="801.57" y="460.00" width="2.42" height="2.69" fill="#c0c0c0" /><rect x="805.61" y="460.00" width="2.42" height="2.69" fill="#c0c0c0" /><rect x="755.17" y="474.39" width="10.76" height="6.72" fill="#c0c0c0" /><rect x="755.17" y="483.54" width="10.76" height="6.72" fill="#c0c0c0" /><rect x="797.27" y="481.52" width="10.63" height="6.99" fill="#c0c0c0" /><rect x="780.73" y="514.47" width="2.69" height="3.09" fill="#c0c0c0" /><rect x="784.76" y="514.47" width="2.69" height="3.09" fill="#c0c0c0" /><rect x="777.09" y="540.30" width="10.76" height="6.46" fill="#c0c0c0" /><rect x="712.36" y="467.80" width="1.43" height="4.98" fill="#c0c0c0" /><rect x="714.24" y="467.80" width="1.43" height="4.98" fill="#c0c0c0" /><rect x="716.12" y="467.80" width="1.43" height="4.98" fill="#c0c0c0" /><rect x="718.01" y="467.80" width="1.43" height="4.98" fill="#c0c0c0" /><rect x="719.89" y="467.80" width="1.43" height="4.98" fill="#c0c0c0" /><rect x="721.77" y="467.80" width="1.43" height="4.98" fill="#c0c0c0" /><rect x="723.66" y="467.80" width="1.43" height="4.98" fill="#c0c0c0" /><rect x="725.54" y="467.80" width="1.43" height="4.98" fill="#c0c0c0" /><rect x="712.36" y="485.29" width="1.43" height="4.98" fill="#c0c0c0" /><rect x="714.24" y="485.29" width="1.43" height="4.98" fill="#c0c0c0" /><rect x="716.12" y="485.29" width="1.43" height="4.98" fill="#c0c0c0" /><rect x="718.01" y="485.29" width="1.43" height="4.98" fill="#c0c0c0" /><rect x="719.89" y="485.29" width="1.43" height="4.98" fill="#c0c0c0" /><rect x="721.77" y="485.29" width="1.43" height="4.98" fill="#c0c0c0" /><rect x="723.66" y="485.29" width="1.43" height="4.98" fill="#c0c0c0" /><rect x="725.54" y="485.29" width="1.43" height="4.98" fill="#c0c0c0" /><rect x="770.24" y="471.03" width="2.96" height="2.69" fill="#c0c0c0" /><rect x="770.24" y="475.20" width="2.96" height="2.69" fill="#c0c0c0" /><rect x="770.24" y="480.17" width="2.96" height="2.69" fill="#c0c0c0" /><rect x="770.24" y="484.21" width="2.96" height="2.69" fill="#c0c0c0" /><rect x="775.75" y="471.03" width="2.96" height="2.69" fill="#c0c0c0" /><rect x="775.75" y="475.20" width="2.96" height="2.69" fill="#c0c0c0" /><rect x="775.75" y="480.17" width="2.96" height="2.69" fill="#c0c0c0" /><rect x="775.75" y="484.21" width="2.96" height="2.69" fill="#c0c0c0" /><rect x="781.13" y="471.03" width="2.96" height="2.69" fill="#c0c0c0" /><rect x="781.13" y="475.20" width="2.96" height="2.69" fill="#c0c0c0" /><rect x="781.13" y="480.17" width="2.96" height="2.69" fill="#c0c0c0" /><rect x="781.13" y="484.21" width="2.96" height="2.69" fill="#c0c0c0" /><rect x="786.78" y="471.03" width="2.96" height="2.69" fill="#c0c0c0" /><rect x="786.78" y="475.20" width="2.96" height="2.69" fill="#c0c0c0" /><rect x="786.78" y="480.17" width="2.96" height="2.69" fill="#c0c0c0" /><rect x="786.78" y="484.21" width="2.96" height="2.69" fill="#c0c0c0" /><path d="M804.28 530.61 h4 M806.28 528.61 v4" stroke="#d0d0d0" stroke-width="0.5"/><rect x="658.06" y="486.23" width="5.92" height="8.74" fill="#3cb878" /><rect x="658.06" y="486.23" width="5.92" height="2.82" fill="#000" /><rect x="658.06" y="492.28" width="2.29" height="2.42" fill="#000" /><rect x="661.96" y="492.28" width="2.02" height="2.42" fill="#000" /><rect x="772.93" y="490.26" width="24.88" height="19.91" fill="#00a651" /><rect x="781.40" y="492.28" width="7.67" height="4.30" fill="#000" /><rect x="781.40" y="504.65" width="7.67" height="4.03" fill="#000" /><rect x="608.37" y="370.46" width="18.37" height="9.93" fill="none" stroke="#e4e4e4" stroke-width="0.6"/><rect x="612.57" y="371.16" width="1.45" height="1.99" fill="#c0c0c0" /><rect x="614.48" y="371.16" width="1.45" height="1.99" fill="#c0c0c0" /><rect x="616.38" y="371.16" width="1.45" height="1.99" fill="#c0c0c0" /><rect x="618.28" y="371.16" width="1.45" height="1.99" fill="#c0c0c0" /><rect x="620.19" y="371.16" width="1.45" height="1.99" fill="#c0c0c0" /><rect x="622.09" y="371.16" width="1.45" height="1.99" fill="#c0c0c0" /><rect x="609.07" y="378.11" width="1.79" height="2.48" fill="#c0c0c0" /><rect x="625.05" y="378.11" width="1.69" height="2.48" fill="#c0c0c0" /><rect x="620.29" y="401.94" width="2.98" height="2.18" fill="#c0c0c0" /><rect x="615.12" y="401.94" width="2.78" height="2.18" fill="#c0c0c0" /><rect x="620.29" y="406.21" width="2.98" height="2.18" fill="#c0c0c0" /><rect x="615.12" y="406.21" width="2.78" height="2.18" fill="#c0c0c0" /><rect x="620.29" y="410.38" width="2.98" height="2.18" fill="#c0c0c0" /><rect x="615.12" y="410.38" width="2.78" height="2.18" fill="#c0c0c0" /><rect x="620.29" y="414.45" width="2.98" height="2.18" fill="#c0c0c0" /><rect x="615.12" y="414.45" width="2.78" height="2.18" fill="#c0c0c0" /><rect x="610.09" y="427.36" width="1.43" height="5.16" fill="#c0c0c0" /><rect x="611.97" y="427.36" width="1.43" height="5.16" fill="#c0c0c0" /><rect x="613.86" y="427.36" width="1.43" height="5.16" fill="#c0c0c0" /><rect x="615.75" y="427.36" width="1.43" height="5.16" fill="#c0c0c0" /><rect x="617.63" y="427.36" width="1.43" height="5.16" fill="#c0c0c0" /><rect x="619.52" y="427.36" width="1.43" height="5.16" fill="#c0c0c0" /><rect x="621.41" y="427.36" width="1.43" height="5.16" fill="#c0c0c0" /><rect x="623.29" y="427.36" width="1.43" height="5.16" fill="#c0c0c0" /><rect x="610.09" y="444.25" width="1.43" height="5.36" fill="#c0c0c0" /><rect x="611.97" y="444.25" width="1.43" height="5.36" fill="#c0c0c0" /><rect x="613.86" y="444.25" width="1.43" height="5.36" fill="#c0c0c0" /><rect x="615.75" y="444.25" width="1.43" height="5.36" fill="#c0c0c0" /><rect x="617.63" y="444.25" width="1.43" height="5.36" fill="#c0c0c0" /><rect x="619.52" y="444.25" width="1.43" height="5.36" fill="#c0c0c0" /><rect x="621.41" y="444.25" width="1.43" height="5.36" fill="#c0c0c0" /><rect x="623.29" y="444.25" width="1.43" height="5.36" fill="#c0c0c0" /><rect x="609.86" y="432.53" width="15.09" height="11.72" fill="none" stroke="#e4e4e4" stroke-width="0.6"/><rect x="620.29" y="452.39" width="2.48" height="3.18" fill="#c0c0c0" /><rect x="624.26" y="452.39" width="2.68" height="3.18" fill="#c0c0c0" /><rect x="599.93" y="419.92" width="2.98" height="2.48" fill="#c0c0c0" /><rect x="604.70" y="419.92" width="2.68" height="2.48" fill="#c0c0c0" /></svg>
<svg class="a" style="left:990px;top:220px;" width="420" height="100" viewBox="990 220 420 100"><rect x="1002.8" y="239.6" width="68.4" height="67.4" fill="#d8d8d8"/><rect x="1002" y="238.8" width="68.3" height="67.2" fill="#f8d61c"/><path d="M1036.6 241 L1042.7 250.7 L1033.2 253.7 L1030 257.7 L1026.8 256.4 Z M1025.7 258.4 L1027.9 259.4 L1029.6 267.4 L1033.5 268 L1038.6 264.4 L1051.6 269.3 L1052.9 270.4 H1018.8 Z M1046.5 257.3 L1052.9 267.7 L1041.3 262.7 Z" fill="#231f20"/><path d="M1031 266 Q1030 260 1034 259.4 Q1037 259.6 1036.4 262.6" fill="none" stroke="#b89a10" stroke-width="0.6"/><text x="1036.3" y="278.8" font-size="8.6" font-weight="bold" text-anchor="middle" textLength="56" lengthAdjust="spacingAndGlyphs" fill="#231f20" stroke="#231f20" stroke-width="0.35" font-family="Liberation Sans, sans-serif">ATTENTION</text><text x="1036.3" y="283.7" font-size="3.4" font-weight="bold" text-anchor="middle" textLength="48" lengthAdjust="spacingAndGlyphs" fill="#3a3010" font-family="Liberation Sans, sans-serif">OBSERVE PRECAUTIONS</text><text x="1036.3" y="287.7" font-size="3.4" font-weight="bold" text-anchor="middle" textLength="30" lengthAdjust="spacingAndGlyphs" fill="#3a3010" font-family="Liberation Sans, sans-serif">FOR HANDLING</text><text x="1036.3" y="293.3" font-size="3.4" font-weight="bold" text-anchor="middle" textLength="37" lengthAdjust="spacingAndGlyphs" fill="#3a3010" font-family="Liberation Sans, sans-serif">ELECTROSTATIC</text><text x="1036.3" y="297.9" font-size="3.4" font-weight="bold" text-anchor="middle" textLength="23.5" lengthAdjust="spacingAndGlyphs" fill="#3a3010" font-family="Liberation Sans, sans-serif">SENSITIVE</text><text x="1036.3" y="302.6" font-size="3.4" font-weight="bold" text-anchor="middle" textLength="19.5" lengthAdjust="spacingAndGlyphs" fill="#3a3010" font-family="Liberation Sans, sans-serif">DEVICES</text><text x="1097.4" y="283.1" font-size="32.5" font-weight="bold" textLength="33.4" lengthAdjust="spacingAndGlyphs" fill="#111" font-family="Liberation Sans, sans-serif">Pb</text><circle cx="1112.4" cy="271.5" r="21.5" fill="none" stroke="#1f9e3c" stroke-width="5.2"/><path d="M1097.6 256.6 L1128.6 287.6" stroke="#1f9e3c" stroke-width="4.4"/><path d="M1127.4 296.4 C1125.4 286 1131 278.6 1145.4 278 C1144.6 288 1140 296.6 1127.4 296.4 Z" fill="#1f9e3c" stroke="#fff" stroke-width="0.8"/><path d="M1126 299 L1139.6 283" stroke="#e8f8e8" stroke-width="0.5"/><text x="1112.3" y="302.5" font-size="8.8" font-weight="bold" text-anchor="middle" textLength="34.4" lengthAdjust="spacingAndGlyphs" fill="#222" font-family="Liberation Sans, sans-serif">lead-free</text><text x="1200.9" y="288.4" font-size="27.2" textLength="122" lengthAdjust="spacingAndGlyphs" fill="#231f20" stroke="#231f20" stroke-width="0.5" font-family="Liberation Sans, sans-serif">AEGIS</text><text x="1203.2" y="301.6" font-size="9.2" font-weight="bold" text-anchor="middle" fill="#8c8c8c" transform="translate(1203.2 0) scale(0.72 1) translate(-1203.2 0)" font-family="Liberation Sans, sans-serif">S</text><text x="1224.5" y="301.6" font-size="9.2" font-weight="bold" text-anchor="middle" fill="#8c8c8c" transform="translate(1224.5 0) scale(0.72 1) translate(-1224.5 0)" font-family="Liberation Sans, sans-serif">O</text><text x="1245" y="301.6" font-size="9.2" font-weight="bold" text-anchor="middle" fill="#8c8c8c" transform="translate(1245 0) scale(0.72 1) translate(-1245 0)" font-family="Liberation Sans, sans-serif">F</text><text x="1265.7" y="301.6" font-size="9.2" font-weight="bold" text-anchor="middle" fill="#8c8c8c" transform="translate(1265.7 0) scale(0.72 1) translate(-1265.7 0)" font-family="Liberation Sans, sans-serif">T</text><text x="1288.4" y="301.6" font-size="9.2" font-weight="bold" text-anchor="middle" fill="#8c8c8c" transform="translate(1288.4 0) scale(0.72 1) translate(-1288.4 0)" font-family="Liberation Sans, sans-serif">W</text><text x="1310" y="301.6" font-size="9.2" font-weight="bold" text-anchor="middle" fill="#8c8c8c" transform="translate(1310 0) scale(0.72 1) translate(-1310 0)" font-family="Liberation Sans, sans-serif">A</text><text x="1331.4" y="301.6" font-size="9.2" font-weight="bold" text-anchor="middle" fill="#8c8c8c" transform="translate(1331.4 0) scale(0.72 1) translate(-1331.4 0)" font-family="Liberation Sans, sans-serif">R</text><text x="1352.5" y="301.6" font-size="9.2" font-weight="bold" text-anchor="middle" fill="#8c8c8c" transform="translate(1352.5 0) scale(0.72 1) translate(-1352.5 0)" font-family="Liberation Sans, sans-serif">E</text><path d="M1327.8 264.2 L1351.2 245.9 V285.1 Z" fill="#ee3a32"/><path d="M1351.2 245.9 L1374.3 264.2 L1369 268.6 L1358.8 263 V279 L1351.2 285.1 Z" fill="#fff" stroke="#ee3a32" stroke-width="0.9"/><path d="M1358.8 263 L1369 268.6 L1358.8 270.4 Z" fill="#ee3a32"/><rect x="1336.4" y="223.9" width="17.4" height="15.6" fill="#e4e4e4" fill-opacity="0.45" stroke="#c8c8c8" stroke-opacity="0.7" stroke-width="0.8"/><g transform="translate(1336.4 223)"><path d="M2.4 8.4 L8 3.2 V6 C12.4 6 15 8.4 15.4 13.2 C13.4 10.6 11.4 10.2 8 10.4 V13.6 Z" fill="#4cb860" fill-opacity="0.6"/></g><rect x="1361.1" y="223.9" width="17.4" height="15.6" fill="#e4e4e4" fill-opacity="0.45" stroke="#c8c8c8" stroke-opacity="0.7" stroke-width="0.8"/><g transform="translate(1378.5 223) scale(-1 1)"><path d="M2.4 8.4 L8 3.2 V6 C12.4 6 15 8.4 15.4 13.2 C13.4 10.6 11.4 10.2 8 10.4 V13.6 Z" fill="#4cb860" fill-opacity="0.6"/></g><rect x="1386.6" y="226.6" width="12.8" height="10.6" rx="0.6" fill="#fff" stroke="#000" stroke-width="1"/><path d="M1388.2 228.2 h3 l-3 3 Z M1397.8 228.2 h-3 l3 3 Z M1388.2 235.6 h3 l-3 -3 Z M1397.8 235.6 h-3 l3 -3 Z" fill="#000"/><rect x="1391" y="237.4" width="4" height="1.8" fill="#000"/><rect x="1387.2" y="238.8" width="11.4" height="1" fill="#000"/></svg>
<div class="a" style="left:1438px;top:224px;width:21px;height:61px;background:#d9d9d9;"></div>
<span class="t" style="left:1453.9px;top:247px;font-size:13.3px;color:#222;transform-origin:0 0;transform:rotate(90deg) scale(0.8,1);">Layers</span>
<svg class="a" style="left:1438px;top:224px;" width="21" height="24" viewBox="0 0 21 24"><path d="M7.4 8.6 L8.6 7.4 H15.2 L16.2 11 L15.4 17.6 L13 19.6 H7.6 L6 16.4 Z" fill="#e84a30"/><path d="M3.8 10.4 L6.4 4.2 H13 L14.6 8.4 L13.6 15.4 L11.4 16.8 H5.4 L3.6 13.4 Z" fill="#22b4ec"/><path d="M6.4 4.2 H13 L13.4 8 L9 10 Z" fill="#4cd8f8"/><path d="M3.6 13.4 L5.4 16.8 H11.4 L13.6 15.4 L8 13 Z" fill="#2a7ce0"/></svg>
<svg class="a" style="left:350px;top:218px;" width="40" height="150" viewBox="350 218 40 150"><path d="M359 227.6 L367.6 229.6 L365.4 231.6 L369.4 235.6 L366.8 238.2 L362.8 234.2 L360.8 236.4 Z" fill="#1a3ac8" stroke="#0a1a70" stroke-width="0.6"/><path d="M370.2 232.6 V241.4 M365.8 237 H374.6" stroke="#111" stroke-width="1"/><path d="M370.2 231.8 l1.6 2 h-3.2 Z M370.2 242.2 l1.6 -2 h-3.2 Z M365 237 l2 1.6 v-3.2 Z M375.4 237 l-2 1.6 v-3.2 Z" fill="#111"/><path d="M359.6 260.6 C361 256.6 364 253.4 367.4 251.6 C369.4 250.6 371 252 370 253.4 L372.6 252.8 C374 253.4 373.4 255.4 372.4 256 C371.4 258.6 368 260.6 365 260.6 L360.4 262.4 Z" fill="#e4a898" stroke="#b07868" stroke-width="0.6"/><path d="M369.6 250.6 Q373.6 250 373.4 254 L371 254.4 Z" fill="#e8e8e8" stroke="#aaa" stroke-width="0.4"/><g fill="none" stroke="#6cc24a" stroke-width="1.3"><rect x="360.6" y="278.4" width="11.2" height="11"/><path d="M366.2 278.4 V289.4 M360.6 283.9 H371.8"/></g><g fill="#4a8ad8"><rect x="365.6" y="277.6" width="1.2" height="1.4"/><rect x="365.6" y="288.8" width="1.2" height="1.4"/><rect x="359.8" y="283.3" width="1.4" height="1.2"/><rect x="371.2" y="283.3" width="1.4" height="1.2"/></g><path d="M358.4 300.2 H373.8 M364.6 303.8 H373.8 M366.6 307.2 H372 M364.6 310.6 H373.8 M361 313.8 H373.8" stroke="#7ad05a" stroke-width="1.2"/><path d="M358 307.2 L361.4 304.8 V306.2 H364 V308.2 H361.4 V309.6 Z" fill="#f8a020"/><g transform="translate(357.8 322)"><path d="M6.5 0 L8.8 2.7 H7.3 V5.7 H10.3 V4.2 L13 6.5 L10.3 8.8 V7.3 H7.3 V10.3 H8.8 L6.5 13 L4.2 10.3 H5.7 V7.3 H2.7 V8.8 L0 6.5 L2.7 4.2 V5.7 H5.7 V2.7 H4.2 Z" fill="#30b830"/></g><path d="M364.8 330.4 L366.8 329 L369.4 331.8 L372 329 L374 330.4 L371.4 333.6 L374 336.8 L372 338.2 L369.4 335.4 L366.8 338.2 L364.8 336.8 L367.4 333.6 Z" fill="#7a7a7a" stroke="#333" stroke-width="0.6"/><g transform="translate(357.8 345)"><path d="M6.5 0 L8.8 2.7 H7.3 V5.7 H10.3 V4.2 L13 6.5 L10.3 8.8 V7.3 H7.3 V10.3 H8.8 L6.5 13 L4.2 10.3 H5.7 V7.3 H2.7 V8.8 L0 6.5 L2.7 4.2 V5.7 H5.7 V2.7 H4.2 Z" fill="#30b830"/></g><path d="M364.6 352.2 H374.2 L370.8 356.4 V360.6 H367.8 V356.4 Z" fill="#8a8a8a" stroke="#333" stroke-width="0.6"/></svg>
<div class="a" style="left:842px;top:334px;width:546px;height:212px;border:1px solid #9a9a9a;border-bottom:none;"></div>
<div class="a" style="left:843px;top:349px;width:544px;height:1px;background:#a8a8a8;"></div>
<div class="a" style="left:843px;top:364px;width:544px;height:1px;background:#e6e6e6;"></div>
<div class="a" style="left:843px;top:378px;width:544px;height:1px;background:#e6e6e6;"></div>
<div class="a" style="left:843px;top:392px;width:544px;height:1px;background:#e6e6e6;"></div>
<div class="a" style="left:843px;top:407px;width:544px;height:1px;background:#e6e6e6;"></div>
<div class="a" style="left:843px;top:421px;width:544px;height:1px;background:#e6e6e6;"></div>
<div class="a" style="left:843px;top:435px;width:544px;height:1px;background:#e6e6e6;"></div>
<div class="a" style="left:843px;top:449px;width:544px;height:1px;background:#e6e6e6;"></div>
<div class="a" style="left:893px;top:350px;width:1px;height:100px;background:#e6e6e6;"></div>
<div class="a" style="left:994px;top:350px;width:1px;height:100px;background:#e6e6e6;"></div>
<div class="a" style="left:1168px;top:350px;width:1px;height:100px;background:#e6e6e6;"></div>
<div class="a" style="left:1192px;top:350px;width:1px;height:100px;background:#e6e6e6;"></div>
<span class="t " style="left:1091.85px;top:338.88px;font-size:6.4px;letter-spacing:0.108px;color:#333;">Auto Placement</span>
<span class="t " style="left:845.10px;top:355.13px;font-size:8px;letter-spacing:-0.084px;color:#222;">Color</span>
<span class="t " style="left:896.50px;top:355.13px;font-size:8px;letter-spacing:-0.086px;color:#222;">Part Number</span>
<span class="t " style="left:997.80px;top:355.13px;font-size:8px;letter-spacing:-0.047px;color:#222;">Description</span>
<span class="t " style="left:1171.20px;top:355.13px;font-size:8px;letter-spacing:0.052px;color:#222;">Qty</span>
<span class="t " style="left:1195.70px;top:355.13px;font-size:8px;letter-spacing:-0.312px;color:#222;">Reference</span>
<div class="a" style="left:854px;top:366px;width:28px;height:11px;background:#00a651;"></div>
<span class="t " style="left:896.90px;top:368.63px;font-size:8px;letter-spacing:-0.280px;color:#222;">AIS21003</span>
<span class="t " style="left:997.80px;top:368.63px;font-size:8px;letter-spacing:-0.219px;color:#222;">IC AMP Audio PWR 1.45W D 8MSOP</span>
<span class="t " style="left:1186.40px;top:368.63px;font-size:8px;letter-spacing:-0.649px;color:#222;">1</span>
<span class="t " style="left:1195.70px;top:368.63px;font-size:8px;letter-spacing:-0.313px;color:#222;">U5</span>
<div class="a" style="left:854px;top:380px;width:28px;height:11px;background:#1ca4ea;"></div>
<span class="t " style="left:896.90px;top:382.73px;font-size:8px;letter-spacing:-0.280px;color:#222;">AIS21004</span>
<span class="t " style="left:997.80px;top:382.73px;font-size:8px;letter-spacing:-0.247px;color:#222;">IC Audio CODEC Stereo 32-QFN</span>
<span class="t " style="left:1186.40px;top:382.73px;font-size:8px;letter-spacing:-0.649px;color:#222;">1</span>
<span class="t " style="left:1195.70px;top:382.73px;font-size:8px;letter-spacing:-0.313px;color:#222;">U2</span>
<div class="a" style="left:854px;top:394px;width:28px;height:11px;background:#ec008c;"></div>
<span class="t " style="left:896.90px;top:396.83px;font-size:8px;letter-spacing:-0.280px;color:#222;">AIS21006</span>
<span class="t " style="left:997.80px;top:396.83px;font-size:8px;letter-spacing:-0.359px;color:#222;">IC BUS Trransceiver 8BIT 24QSOP</span>
<span class="t " style="left:1186.40px;top:396.83px;font-size:8px;letter-spacing:-0.649px;color:#222;">4</span>
<span class="t " style="left:1195.70px;top:396.83px;font-size:8px;letter-spacing:-0.216px;color:#222;">U6, U8-U9, U11</span>
<div class="a" style="left:854px;top:408px;width:28px;height:11px;background:#f4906c;"></div>
<span class="t " style="left:896.90px;top:410.93px;font-size:8px;letter-spacing:-0.280px;color:#222;">AIS21007</span>
<span class="t " style="left:997.80px;top:410.93px;font-size:8px;letter-spacing:-0.250px;color:#222;">IC Gate NAND 2-INP UHS SC70-5</span>
<span class="t " style="left:1186.40px;top:410.93px;font-size:8px;letter-spacing:-0.649px;color:#222;">1</span>
<span class="t " style="left:1195.70px;top:410.93px;font-size:8px;letter-spacing:-0.359px;color:#222;">U24</span>
<div class="a" style="left:854px;top:423px;width:28px;height:11px;background:#3cb878;"></div>
<span class="t " style="left:896.90px;top:425.13px;font-size:8px;letter-spacing:-0.280px;color:#222;">AIS21008</span>
<span class="t " style="left:997.80px;top:425.13px;font-size:8px;letter-spacing:-0.412px;color:#222;">IC Gate OR SGL 2INP EXCL SC70-5</span>
<span class="t " style="left:1186.40px;top:425.13px;font-size:8px;letter-spacing:-0.649px;color:#222;">1</span>
<span class="t " style="left:1195.70px;top:425.13px;font-size:8px;letter-spacing:-0.359px;color:#222;">U25</span>
<div class="a" style="left:854px;top:438px;width:28px;height:11px;background:#1cb8b0;"></div>
<span class="t " style="left:896.90px;top:440.23px;font-size:8px;letter-spacing:-0.280px;color:#222;">AIS21010</span>
<span class="t " style="left:997.80px;top:440.23px;font-size:8px;letter-spacing:-0.298px;color:#222;">OSC 26.000 MHZ 3.3V SMD</span>
<span class="t " style="left:1186.40px;top:440.23px;font-size:8px;letter-spacing:-0.649px;color:#222;">1</span>
<span class="t " style="left:1195.70px;top:440.23px;font-size:8px;letter-spacing:-0.313px;color:#222;">U3</span>
<div class="a" style="left:379px;top:957px;width:1056px;height:25px;background:#1b2e3c;"></div>
<div class="a" style="left:1334px;top:959px;width:49px;height:20px;background:#fff;"></div>
<div class="a" style="left:1367px;top:960px;width:15px;height:18px;background:#e6e6e6;border:1px solid #a8a8a8;"></div>
<span class="t " style="left:1338.30px;top:964.04px;font-size:12px;letter-spacing:-0.573px;color:#444;">57%</span>
<div class="a" style="left:1400px;top:922px;width:20px;height:20px;background:#e4e4e4;border:1px solid #b8b8b8;"></div>
<svg class="a" style="left:1187px;top:915px;" width="260" height="75" viewBox="1187 915 260 75"><path d="M1203 969 V965.6 a2.8 2.8 0 0 1 5.6 0 V967.6" fill="none" stroke="#b8b8b8" stroke-width="1.4"/><rect x="1196.2" y="968.6" width="9.6" height="7.4" fill="#f0b400"/><path d="M1197 976 l2.4 -5 h1.6 l-2.4 5 Z M1200.4 976 l2.4 -5 h1.6 l-2.4 5 Z M1203.8 976 l2 -4.2 v3 l-0.6 1.2 Z" fill="#111"/><rect x="1196.2" y="968.6" width="9.6" height="1.8" fill="#c8c8c8"/><rect x="1218.5" y="961.9" width="15" height="15" fill="none" stroke="#fff" stroke-width="1" stroke-dasharray="2 1.4"/><path d="M1225.6 969.6 L1221 974.6" stroke="#c8a050" stroke-width="2.2" stroke-linecap="round"/><circle cx="1228" cy="967" r="3.7" fill="#bfe0f8" stroke="#8a9aaa" stroke-width="0.9"/><circle cx="1227.2" cy="966" r="1.4" fill="#f0f8ff"/><path d="M1250.6 971.6 L1246 976.6" stroke="#c8a050" stroke-width="2.2" stroke-linecap="round"/><circle cx="1253" cy="969" r="3.7" fill="#bfe0f8" stroke="#8a9aaa" stroke-width="0.9"/><circle cx="1252.2" cy="968" r="1.4" fill="#f0f8ff"/><text x="1249" y="967" font-size="7.4" font-weight="bold" text-anchor="middle" textLength="14.8" lengthAdjust="spacingAndGlyphs" fill="#fff" font-family="Liberation Sans, sans-serif">100</text><path d="M1272.9 971.6 L1268.3 976.6" stroke="#c8a050" stroke-width="2.2" stroke-linecap="round"/><circle cx="1275.3" cy="969" r="3.7" fill="#bfe0f8" stroke="#8a9aaa" stroke-width="0.9"/><circle cx="1274.5" cy="968" r="1.4" fill="#f0f8ff"/><text x="1271.4" y="967" font-size="7.4" font-weight="bold" text-anchor="middle" textLength="13.2" lengthAdjust="spacingAndGlyphs" fill="#fff" font-family="Liberation Sans, sans-serif">ALL</text><path d="M1293.8 971 L1298.4 976" stroke="#c8a050" stroke-width="2.2" stroke-linecap="round"/><circle cx="1291.4" cy="968.4" r="3.7" fill="#bfe0f8" stroke="#8a9aaa" stroke-width="0.9"/><circle cx="1290.6" cy="967.4" r="1.4" fill="#f0f8ff"/><path d="M1290.4 963.6 h5 M1297.4 963.6 h5" stroke="#fff" stroke-width="1.4"/><path d="M1316.7 971 L1321.3 976" stroke="#c8a050" stroke-width="2.2" stroke-linecap="round"/><circle cx="1314.3" cy="968.4" r="3.7" fill="#bfe0f8" stroke="#8a9aaa" stroke-width="0.9"/><circle cx="1313.5" cy="967.4" r="1.4" fill="#f0f8ff"/><path d="M1320 963.6 h5.8" stroke="#fff" stroke-width="1.4"/><path d="M1371 967.4 l3.5 -3.8 l3.5 3.8 M1371 970.8 l3.5 3.8 l3.5 -3.8" fill="none" stroke="#555" stroke-width="1"/><path d="M1397.8 971 L1402.4 976" stroke="#c8a050" stroke-width="2.2" stroke-linecap="round"/><circle cx="1395.4" cy="968.4" r="3.7" fill="#bfe0f8" stroke="#8a9aaa" stroke-width="0.9"/><circle cx="1394.6" cy="967.4" r="1.4" fill="#f0f8ff"/><path d="M1401 964 h5.6 M1403.8 961.2 v5.6" stroke="#fff" stroke-width="1.6"/><path d="M1420.6 971 L1425.2 976" stroke="#c8a050" stroke-width="2.2" stroke-linecap="round"/><circle cx="1418.2" cy="968.4" r="3.7" fill="#bfe0f8" stroke="#8a9aaa" stroke-width="0.9"/><circle cx="1417.4" cy="967.4" r="1.4" fill="#f0f8ff"/><path d="M1417 964 h5.4 M1419.7 961.3 v5.4 M1424.4 964 h5.4 M1427.1 961.3 v5.4" stroke="#fff" stroke-width="1.6"/><g opacity="1"><circle cx="1410" cy="932" r="4.85" fill="#f4f4f4" stroke="#8a8a8a" stroke-width="1.5"/><circle cx="1410" cy="932" r="3.2" fill="#2f9e3a"/><g transform="translate(1410 932)"><path d="M-1.8 -1.8 H1.6 L-0.2 0 L2 2 L1 2.4 L-1 0.6 L-1.8 1.6 Z" fill="#fff"/></g></g></svg>
</body></html>
